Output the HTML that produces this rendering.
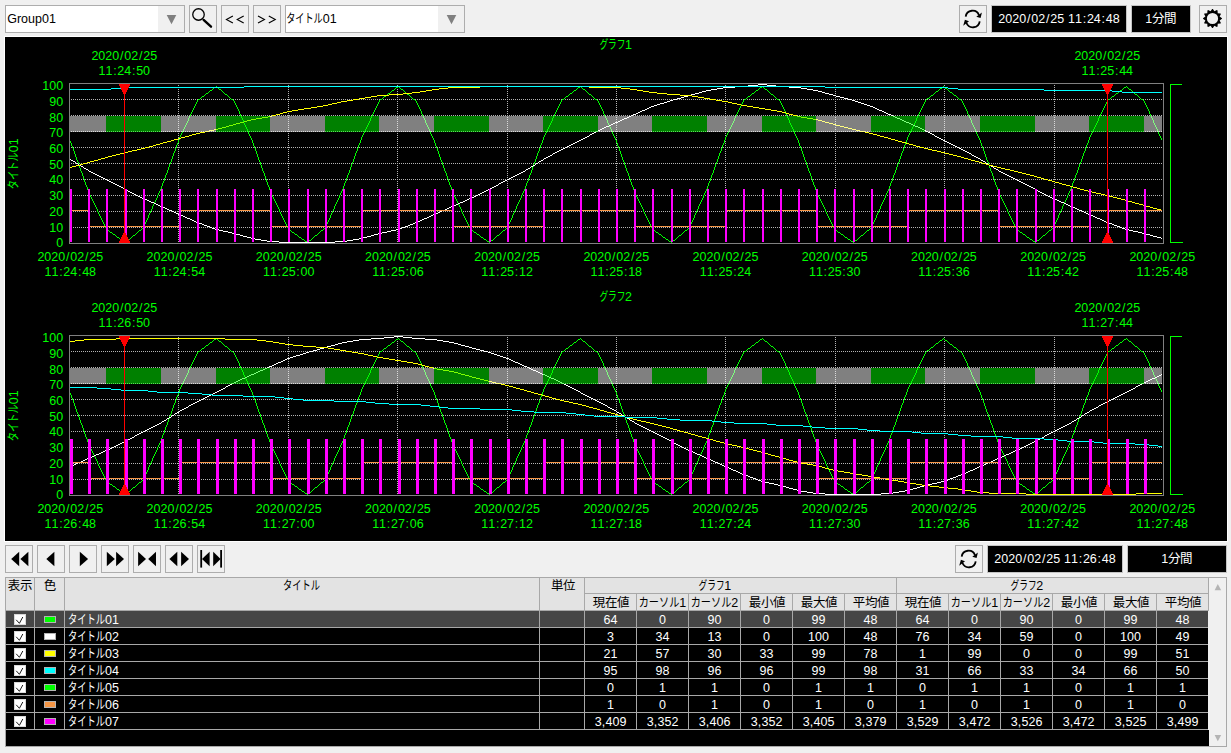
<!DOCTYPE html>
<html><head><meta charset="utf-8"><title>Trend</title>
<style>html,body{margin:0;padding:0;background:#f0f0f0;overflow:hidden}body{width:1231px;height:753px;font-family:"Liberation Sans",sans-serif}</style>
</head><body>
<svg width="1231" height="753" viewBox="0 0 1231 753" style="display:block">
<rect x="0" y="0" width="1231" height="753" fill="#f0f0f0"/>
<rect x="5.5" y="5.5" width="179" height="27" fill="#ffffff" stroke="#adadad"/>
<rect x="158" y="6" width="26" height="26" fill="#f0f0f0"/>
<polygon points="166.7,15 176.3,15 171.5,24.3" fill="#808080"/>
<text font-family="Liberation Sans, sans-serif" font-size="12.5" fill="#000" y="23" x="7.20 16.92 21.09 28.04 34.99 41.94 48.89">Group01</text>
<rect x="285.5" y="5.5" width="179" height="27" fill="#ffffff" stroke="#adadad"/>
<rect x="438" y="6" width="26" height="26" fill="#f0f0f0"/>
<polygon points="446.7,15 456.3,15 451.5,24.3" fill="#808080"/>
<text font-family="'Liberation Sans', 'Noto Sans CJK JP', sans-serif" font-size="12.5" fill="#000" x="286.15" y="23" textLength="36.5" lengthAdjust="spacingAndGlyphs">タイトル</text>
<text font-family="Liberation Sans, sans-serif" font-size="12.5" fill="#000" y="23" x="322.70 329.65">01</text>
<rect x="189.5" y="5.5" width="27" height="27" fill="#f0f0f0" stroke="#adadad" stroke-width="1"/>
<circle cx="198.5" cy="14.5" r="5.75" fill="none" stroke="#000" stroke-width="1.3"/>
<line x1="203.6" y1="19.9" x2="211.0" y2="26.7" stroke="#000" stroke-width="2.4" stroke-linecap="round"/>
<rect x="221.5" y="5.5" width="27" height="27" fill="#f0f0f0" stroke="#adadad" stroke-width="1"/>
<rect x="253.5" y="5.5" width="27" height="27" fill="#f0f0f0" stroke="#adadad" stroke-width="1"/>
<polyline points="232.9,15.9 226.4,19.5 232.9,23.1" fill="none" stroke="#000" stroke-width="1.1"/>
<polyline points="243.7,15.9 237.2,19.5 243.7,23.1" fill="none" stroke="#000" stroke-width="1.1"/>
<polyline points="258,15.9 264.5,19.5 258,23.1" fill="none" stroke="#000" stroke-width="1.1"/>
<polyline points="268.8,15.9 275.3,19.5 268.8,23.1" fill="none" stroke="#000" stroke-width="1.1"/>
<rect x="959.5" y="5.5" width="27" height="27" fill="#f0f0f0" stroke="#adadad" stroke-width="1"/>
<g transform="translate(0 0)">
<path d="M965.7 16.7A6.9 6.9 0 0 1 979.0 15.2" fill="none" stroke="#000" stroke-width="1.8"/>
<polygon points="981.9,12.4 980.6,17.9 976.3,16.8" fill="#000"/>
<path d="M979.7 21.3A6.9 6.9 0 0 1 966.4 22.8" fill="none" stroke="#000" stroke-width="1.8"/>
<polygon points="963.2,25.7 964.9,19.7 969.0,21.3" fill="#000"/>
</g>
<rect x="991.5" y="5.5" width="135" height="27" fill="#000" stroke="#c4c4c4"/>
<text font-family="Liberation Sans, sans-serif" font-size="12.5" fill="#fff" y="23" x="998.30 1005.25 1012.20 1019.16 1026.92 1031.21 1038.16 1045.92 1050.21 1057.16 1064.38 1068.12 1075.07 1082.73 1086.92 1093.87 1101.54 1105.72 1112.67">2020/02/25 11:24:48</text>
<rect x="1131.5" y="5.5" width="59" height="27" fill="#000" stroke="#c4c4c4"/>
<text font-family="Liberation Sans, sans-serif" font-size="12.5" fill="#fff" y="23" x="1145.15">1</text>
<text font-family="'Liberation Sans', 'Noto Sans CJK JP', sans-serif" font-size="12.5" fill="#fff" y="23.25" x="1152.05 1164.05">分間</text>
<rect x="1199.5" y="5.5" width="27" height="27" fill="#f0f0f0" stroke="#adadad" stroke-width="1"/>
<path d="M1212.14 9.01L1212.86 9.01L1214.42 11.35L1216.93 10.10L1217.56 10.46L1217.73 13.27L1220.54 13.44L1220.90 14.07L1219.65 16.58L1221.99 18.14L1221.99 18.86L1219.65 20.42L1220.90 22.93L1220.54 23.56L1217.73 23.73L1217.56 26.54L1216.93 26.90L1214.42 25.65L1212.86 27.99L1212.14 27.99L1210.58 25.65L1208.07 26.90L1207.44 26.54L1207.27 23.73L1204.46 23.56L1204.10 22.93L1205.35 20.42L1203.01 18.86L1203.01 18.14L1205.35 16.58L1204.10 14.07L1204.46 13.44L1207.27 13.27L1207.44 10.46L1208.07 10.10L1210.58 11.35ZM1206.90 18.50A5.6 5.6 0 1 0 1218.10 18.50A5.6 5.6 0 1 0 1206.90 18.50Z" fill="#000" fill-rule="evenodd"/>
<rect x="4" y="36" width="1224" height="506" fill="#ffffff"/>
<rect x="5" y="37" width="1222" height="504" fill="#000000"/>
<text font-family="'Liberation Sans', 'Noto Sans CJK JP', sans-serif" font-size="12.5" fill="#00ff00" x="599.41" y="49.3" textLength="26" lengthAdjust="spacingAndGlyphs">グラフ</text>
<text font-family="Liberation Sans, sans-serif" font-size="12.5" fill="#00ff00" y="49.3" x="625.00">1</text>
<text font-family="Liberation Sans, sans-serif" font-size="12.5" fill="#00ff00" y="90" x="42.34 49.30 56.25">100</text>
<text font-family="Liberation Sans, sans-serif" font-size="12.5" fill="#00ff00" y="106" x="49.30 56.25">90</text>
<text font-family="Liberation Sans, sans-serif" font-size="12.5" fill="#00ff00" y="122" x="49.30 56.25">80</text>
<text font-family="Liberation Sans, sans-serif" font-size="12.5" fill="#00ff00" y="137" x="49.30 56.25">70</text>
<text font-family="Liberation Sans, sans-serif" font-size="12.5" fill="#00ff00" y="153" x="49.30 56.25">60</text>
<text font-family="Liberation Sans, sans-serif" font-size="12.5" fill="#00ff00" y="169" x="49.30 56.25">50</text>
<text font-family="Liberation Sans, sans-serif" font-size="12.5" fill="#00ff00" y="184" x="49.30 56.25">40</text>
<text font-family="Liberation Sans, sans-serif" font-size="12.5" fill="#00ff00" y="200" x="49.30 56.25">30</text>
<text font-family="Liberation Sans, sans-serif" font-size="12.5" fill="#00ff00" y="216" x="49.30 56.25">20</text>
<text font-family="Liberation Sans, sans-serif" font-size="12.5" fill="#00ff00" y="232" x="49.30 56.25">10</text>
<text font-family="Liberation Sans, sans-serif" font-size="12.5" fill="#00ff00" y="247" x="56.25">0</text>
<g transform="translate(18.3 188.2) rotate(-90)">
<text font-family="'Liberation Sans', 'Noto Sans CJK JP', sans-serif" font-size="12.5" fill="#00ff00" x="-0.95" y="0" textLength="37" lengthAdjust="spacingAndGlyphs">タイトル</text>
<text font-family="Liberation Sans, sans-serif" font-size="12.5" fill="#00ff00" y="0" x="36.00 42.95">01</text>
</g>
<line x1="71" y1="99.5" x2="1163" y2="99.5" stroke="#b4b4b4" stroke-dasharray="1 1" shape-rendering="crispEdges"/>
<line x1="71" y1="115.5" x2="1163" y2="115.5" stroke="#b4b4b4" stroke-dasharray="1 1" shape-rendering="crispEdges"/>
<line x1="71" y1="131.5" x2="1163" y2="131.5" stroke="#b4b4b4" stroke-dasharray="1 1" shape-rendering="crispEdges"/>
<line x1="71" y1="147.5" x2="1163" y2="147.5" stroke="#b4b4b4" stroke-dasharray="1 1" shape-rendering="crispEdges"/>
<line x1="71" y1="163.5" x2="1163" y2="163.5" stroke="#b4b4b4" stroke-dasharray="1 1" shape-rendering="crispEdges"/>
<line x1="71" y1="179.5" x2="1163" y2="179.5" stroke="#b4b4b4" stroke-dasharray="1 1" shape-rendering="crispEdges"/>
<line x1="71" y1="195.5" x2="1163" y2="195.5" stroke="#b4b4b4" stroke-dasharray="1 1" shape-rendering="crispEdges"/>
<line x1="71" y1="211.5" x2="1163" y2="211.5" stroke="#b4b4b4" stroke-dasharray="1 1" shape-rendering="crispEdges"/>
<line x1="71" y1="227.5" x2="1163" y2="227.5" stroke="#b4b4b4" stroke-dasharray="1 1" shape-rendering="crispEdges"/>
<line x1="178.5" y1="85" x2="178.5" y2="243" stroke="#b4b4b4" stroke-dasharray="1 1" shape-rendering="crispEdges"/>
<line x1="288.5" y1="85" x2="288.5" y2="243" stroke="#b4b4b4" stroke-dasharray="1 1" shape-rendering="crispEdges"/>
<line x1="397.5" y1="85" x2="397.5" y2="243" stroke="#b4b4b4" stroke-dasharray="1 1" shape-rendering="crispEdges"/>
<line x1="507.5" y1="85" x2="507.5" y2="243" stroke="#b4b4b4" stroke-dasharray="1 1" shape-rendering="crispEdges"/>
<line x1="616.5" y1="85" x2="616.5" y2="243" stroke="#b4b4b4" stroke-dasharray="1 1" shape-rendering="crispEdges"/>
<line x1="725.5" y1="85" x2="725.5" y2="243" stroke="#b4b4b4" stroke-dasharray="1 1" shape-rendering="crispEdges"/>
<line x1="835.5" y1="85" x2="835.5" y2="243" stroke="#b4b4b4" stroke-dasharray="1 1" shape-rendering="crispEdges"/>
<line x1="944.5" y1="85" x2="944.5" y2="243" stroke="#b4b4b4" stroke-dasharray="1 1" shape-rendering="crispEdges"/>
<line x1="1054.5" y1="85" x2="1054.5" y2="243" stroke="#b4b4b4" stroke-dasharray="1 1" shape-rendering="crispEdges"/>
<path d="M70 141h1v2h-1zM71 143h1v3h-1zM72 146h1v2h-1zM73 148h1v3h-1zM74 151h1v3h-1zM75 154h1v3h-1zM76 157h1v3h-1zM77 160h1v2h-1zM78 162h1v3h-1zM79 165h1v3h-1zM80 168h1v3h-1zM81 171h1v2h-1zM82 173h1v3h-1zM83 176h1v3h-1zM84 179h1v3h-1zM85 182h1v3h-1zM86 185h1v2h-1zM87 187h1v3h-1zM88 190h1v3h-1zM89 193h1v2h-1zM90 195h1v2h-1zM91 197h1v2h-1zM92 199h1v2h-1zM93 201h1v2h-1zM94 203h1v2h-1zM95 205h1v2h-1zM96 207h1v2h-1zM97 209h1v3h-1zM98 212h1v2h-1zM99 214h1v2h-1zM100 216h1v2h-1zM101 218h1v2h-1zM102 220h1v2h-1zM103 222h1v2h-1zM104 224h1v2h-1zM105 226h1v2h-1zM106 228h1v2h-1zM107 230h2v1h-2zM109 231h1v1h-1zM110 232h2v1h-2zM112 233h1v1h-1zM113 234h2v1h-2zM115 235h1v1h-1zM116 236h1v1h-1zM117 237h2v1h-2zM119 238h1v1h-1zM120 239h2v1h-2zM122 240h1v1h-1zM123 241h2v1h-2zM125 242h1v1h-1zM126 241h1v1h-1zM127 240h2v1h-2zM129 239h1v1h-1zM130 238h1v1h-1zM131 237h1v1h-1zM132 236h1v1h-1zM133 235h2v1h-2zM135 234h1v1h-1zM136 233h1v1h-1zM137 232h1v1h-1zM138 231h1v1h-1zM139 230h2v1h-2zM141 229h1v1h-1zM142 228h1v1h-1zM143 226h1v2h-1zM144 224h1v2h-1zM145 222h1v2h-1zM146 220h1v2h-1zM147 218h1v2h-1zM148 215h1v3h-1zM149 213h1v2h-1zM150 211h1v2h-1zM151 209h1v2h-1zM152 206h1v3h-1zM153 204h1v2h-1zM154 202h1v2h-1zM155 200h1v2h-1zM156 198h1v2h-1zM157 195h1v3h-1zM158 193h1v2h-1zM159 191h1v2h-1zM160 189h1v2h-1zM161 186h1v3h-1zM162 183h1v3h-1zM163 181h1v2h-1zM164 178h1v3h-1zM165 175h1v3h-1zM166 173h1v2h-1zM167 170h1v3h-1zM168 167h1v3h-1zM169 164h1v3h-1zM170 162h1v2h-1zM171 159h1v3h-1zM172 156h1v3h-1zM173 153h1v3h-1zM174 151h1v2h-1zM175 148h1v3h-1zM176 145h1v3h-1zM177 143h1v2h-1zM178 140h1v3h-1zM179 137h1v3h-1zM180 135h1v2h-1zM181 133h1v2h-1zM182 131h1v2h-1zM183 129h1v2h-1zM184 127h1v2h-1zM185 125h1v2h-1zM186 123h1v2h-1zM187 121h1v2h-1zM188 118h1v3h-1zM189 116h1v2h-1zM190 114h1v2h-1zM191 112h1v2h-1zM192 110h1v2h-1zM193 108h1v2h-1zM194 106h1v2h-1zM195 104h1v2h-1zM196 102h1v2h-1zM197 100h1v2h-1zM198 99h2v1h-2zM200 98h1v1h-1zM201 97h1v1h-1zM202 96h2v1h-2zM204 95h1v1h-1zM205 94h1v1h-1zM206 93h2v1h-2zM208 92h1v1h-1zM209 91h1v1h-1zM210 90h2v1h-2zM212 89h1v1h-1zM213 88h1v1h-1zM214 87h2v1h-2zM216 86h1v1h-1zM217 87h1v1h-1zM218 88h1v1h-1zM219 89h2v1h-2zM221 90h1v1h-1zM222 91h1v1h-1zM223 92h1v1h-1zM224 93h1v1h-1zM225 94h2v1h-2zM227 95h1v1h-1zM228 96h1v1h-1zM229 97h1v1h-1zM230 98h1v1h-1zM231 99h2v1h-2zM233 100h1v1h-1zM234 101h1v2h-1zM235 103h1v2h-1zM236 105h1v2h-1zM237 107h1v2h-1zM238 109h1v2h-1zM239 111h1v3h-1zM240 114h1v2h-1zM241 116h1v2h-1zM242 118h1v2h-1zM243 120h1v3h-1zM244 123h1v2h-1zM245 125h1v2h-1zM246 127h1v2h-1zM247 129h1v2h-1zM248 131h1v3h-1zM249 134h1v2h-1zM250 136h1v2h-1zM251 138h1v2h-1zM252 140h1v3h-1zM253 143h1v3h-1zM254 146h1v2h-1zM255 148h1v3h-1zM256 151h1v3h-1zM257 154h1v3h-1zM258 157h1v3h-1zM259 160h1v2h-1zM260 162h1v3h-1zM261 165h1v3h-1zM262 168h1v3h-1zM263 171h1v2h-1zM264 173h1v3h-1zM265 176h1v3h-1zM266 179h1v3h-1zM267 182h1v3h-1zM268 185h1v2h-1zM269 187h1v3h-1zM270 190h1v3h-1zM271 193h1v2h-1zM272 195h1v2h-1zM273 197h1v2h-1zM274 199h1v2h-1zM275 201h1v2h-1zM276 203h1v2h-1zM277 205h1v2h-1zM278 207h1v2h-1zM279 209h1v3h-1zM280 212h1v2h-1zM281 214h1v2h-1zM282 216h1v2h-1zM283 218h1v2h-1zM284 220h1v2h-1zM285 222h1v2h-1zM286 224h1v2h-1zM287 226h1v2h-1zM288 228h1v2h-1zM289 230h2v1h-2zM291 231h1v1h-1zM292 232h2v1h-2zM294 233h1v1h-1zM295 234h2v1h-2zM297 235h1v1h-1zM298 236h1v1h-1zM299 237h2v1h-2zM301 238h1v1h-1zM302 239h2v1h-2zM304 240h1v1h-1zM305 241h2v1h-2zM307 242h1v1h-1zM308 241h1v1h-1zM309 240h2v1h-2zM311 239h1v1h-1zM312 238h1v1h-1zM313 237h1v1h-1zM314 236h1v1h-1zM315 235h2v1h-2zM317 234h1v1h-1zM318 233h1v1h-1zM319 232h1v1h-1zM320 231h1v1h-1zM321 230h2v1h-2zM323 229h1v1h-1zM324 228h1v1h-1zM325 226h1v2h-1zM326 224h1v2h-1zM327 222h1v2h-1zM328 220h1v2h-1zM329 218h1v2h-1zM330 215h1v3h-1zM331 213h1v2h-1zM332 211h1v2h-1zM333 209h1v2h-1zM334 206h1v3h-1zM335 204h1v2h-1zM336 202h1v2h-1zM337 200h1v2h-1zM338 198h1v2h-1zM339 195h1v3h-1zM340 193h1v2h-1zM341 191h1v2h-1zM342 189h1v2h-1zM343 186h1v3h-1zM344 183h1v3h-1zM345 181h1v2h-1zM346 178h1v3h-1zM347 175h1v3h-1zM348 173h1v2h-1zM349 170h1v3h-1zM350 167h1v3h-1zM351 164h1v3h-1zM352 162h1v2h-1zM353 159h1v3h-1zM354 156h1v3h-1zM355 153h1v3h-1zM356 151h1v2h-1zM357 148h1v3h-1zM358 145h1v3h-1zM359 143h1v2h-1zM360 140h1v3h-1zM361 137h1v3h-1zM362 135h1v2h-1zM363 133h1v2h-1zM364 131h1v2h-1zM365 129h1v2h-1zM366 127h1v2h-1zM367 125h1v2h-1zM368 123h1v2h-1zM369 121h1v2h-1zM370 118h1v3h-1zM371 116h1v2h-1zM372 114h1v2h-1zM373 112h1v2h-1zM374 110h1v2h-1zM375 108h1v2h-1zM376 106h1v2h-1zM377 104h1v2h-1zM378 102h1v2h-1zM379 100h1v2h-1zM380 99h2v1h-2zM382 98h1v1h-1zM383 97h1v1h-1zM384 96h2v1h-2zM386 95h1v1h-1zM387 94h1v1h-1zM388 93h2v1h-2zM390 92h1v1h-1zM391 91h1v1h-1zM392 90h2v1h-2zM394 89h1v1h-1zM395 88h1v1h-1zM396 87h2v1h-2zM398 86h1v1h-1zM399 87h1v1h-1zM400 88h1v1h-1zM401 89h2v1h-2zM403 90h1v1h-1zM404 91h1v1h-1zM405 92h1v1h-1zM406 93h1v1h-1zM407 94h2v1h-2zM409 95h1v1h-1zM410 96h1v1h-1zM411 97h1v1h-1zM412 98h1v1h-1zM413 99h2v1h-2zM415 100h1v1h-1zM416 101h1v2h-1zM417 103h1v2h-1zM418 105h1v2h-1zM419 107h1v2h-1zM420 109h1v2h-1zM421 111h1v3h-1zM422 114h1v2h-1zM423 116h1v2h-1zM424 118h1v2h-1zM425 120h1v3h-1zM426 123h1v2h-1zM427 125h1v2h-1zM428 127h1v2h-1zM429 129h1v2h-1zM430 131h1v3h-1zM431 134h1v2h-1zM432 136h1v2h-1zM433 138h1v2h-1zM434 140h1v3h-1zM435 143h1v3h-1zM436 146h1v2h-1zM437 148h1v3h-1zM438 151h1v3h-1zM439 154h1v3h-1zM440 157h1v3h-1zM441 160h1v2h-1zM442 162h1v3h-1zM443 165h1v3h-1zM444 168h1v3h-1zM445 171h1v2h-1zM446 173h1v3h-1zM447 176h1v3h-1zM448 179h1v3h-1zM449 182h1v3h-1zM450 185h1v2h-1zM451 187h1v3h-1zM452 190h1v3h-1zM453 193h1v2h-1zM454 195h1v2h-1zM455 197h1v2h-1zM456 199h1v2h-1zM457 201h1v2h-1zM458 203h1v2h-1zM459 205h1v2h-1zM460 207h1v2h-1zM461 209h1v3h-1zM462 212h1v2h-1zM463 214h1v2h-1zM464 216h1v2h-1zM465 218h1v2h-1zM466 220h1v2h-1zM467 222h1v2h-1zM468 224h1v2h-1zM469 226h1v2h-1zM470 228h1v2h-1zM471 230h2v1h-2zM473 231h1v1h-1zM474 232h2v1h-2zM476 233h1v1h-1zM477 234h2v1h-2zM479 235h1v1h-1zM480 236h1v1h-1zM481 237h2v1h-2zM483 238h1v1h-1zM484 239h2v1h-2zM486 240h1v1h-1zM487 241h2v1h-2zM489 242h1v1h-1zM490 241h1v1h-1zM491 240h2v1h-2zM493 239h1v1h-1zM494 238h1v1h-1zM495 237h1v1h-1zM496 236h1v1h-1zM497 235h2v1h-2zM499 234h1v1h-1zM500 233h1v1h-1zM501 232h1v1h-1zM502 231h1v1h-1zM503 230h2v1h-2zM505 229h1v1h-1zM506 228h1v1h-1zM507 226h1v2h-1zM508 224h1v2h-1zM509 222h1v2h-1zM510 220h1v2h-1zM511 218h1v2h-1zM512 215h1v3h-1zM513 213h1v2h-1zM514 211h1v2h-1zM515 209h1v2h-1zM516 206h1v3h-1zM517 204h1v2h-1zM518 202h1v2h-1zM519 200h1v2h-1zM520 198h1v2h-1zM521 195h1v3h-1zM522 193h1v2h-1zM523 191h1v2h-1zM524 189h1v2h-1zM525 186h1v3h-1zM526 183h1v3h-1zM527 181h1v2h-1zM528 178h1v3h-1zM529 175h1v3h-1zM530 173h1v2h-1zM531 170h1v3h-1zM532 167h1v3h-1zM533 164h1v3h-1zM534 162h1v2h-1zM535 159h1v3h-1zM536 156h1v3h-1zM537 153h1v3h-1zM538 151h1v2h-1zM539 148h1v3h-1zM540 145h1v3h-1zM541 143h1v2h-1zM542 140h1v3h-1zM543 137h1v3h-1zM544 135h1v2h-1zM545 133h1v2h-1zM546 131h1v2h-1zM547 129h1v2h-1zM548 127h1v2h-1zM549 125h1v2h-1zM550 123h1v2h-1zM551 121h1v2h-1zM552 118h1v3h-1zM553 116h1v2h-1zM554 114h1v2h-1zM555 112h1v2h-1zM556 110h1v2h-1zM557 108h1v2h-1zM558 106h1v2h-1zM559 104h1v2h-1zM560 102h1v2h-1zM561 100h1v2h-1zM562 99h2v1h-2zM564 98h1v1h-1zM565 97h1v1h-1zM566 96h2v1h-2zM568 95h1v1h-1zM569 94h1v1h-1zM570 93h2v1h-2zM572 92h1v1h-1zM573 91h1v1h-1zM574 90h2v1h-2zM576 89h1v1h-1zM577 88h1v1h-1zM578 87h2v1h-2zM580 86h1v1h-1zM581 87h1v1h-1zM582 88h1v1h-1zM583 89h2v1h-2zM585 90h1v1h-1zM586 91h1v1h-1zM587 92h1v1h-1zM588 93h1v1h-1zM589 94h2v1h-2zM591 95h1v1h-1zM592 96h1v1h-1zM593 97h1v1h-1zM594 98h1v1h-1zM595 99h2v1h-2zM597 100h1v1h-1zM598 101h1v2h-1zM599 103h1v2h-1zM600 105h1v2h-1zM601 107h1v2h-1zM602 109h1v2h-1zM603 111h1v3h-1zM604 114h1v2h-1zM605 116h1v2h-1zM606 118h1v2h-1zM607 120h1v3h-1zM608 123h1v2h-1zM609 125h1v2h-1zM610 127h1v2h-1zM611 129h1v2h-1zM612 131h1v3h-1zM613 134h1v2h-1zM614 136h1v2h-1zM615 138h1v2h-1zM616 140h1v3h-1zM617 143h1v3h-1zM618 146h1v2h-1zM619 148h1v3h-1zM620 151h1v3h-1zM621 154h1v3h-1zM622 157h1v3h-1zM623 160h1v2h-1zM624 162h1v3h-1zM625 165h1v3h-1zM626 168h1v3h-1zM627 171h1v2h-1zM628 173h1v3h-1zM629 176h1v3h-1zM630 179h1v3h-1zM631 182h1v3h-1zM632 185h1v2h-1zM633 187h1v3h-1zM634 190h1v3h-1zM635 193h1v2h-1zM636 195h1v2h-1zM637 197h1v2h-1zM638 199h1v2h-1zM639 201h1v2h-1zM640 203h1v2h-1zM641 205h1v2h-1zM642 207h1v2h-1zM643 209h1v3h-1zM644 212h1v2h-1zM645 214h1v2h-1zM646 216h1v2h-1zM647 218h1v2h-1zM648 220h1v2h-1zM649 222h1v2h-1zM650 224h1v2h-1zM651 226h1v2h-1zM652 228h1v2h-1zM653 230h2v1h-2zM655 231h1v1h-1zM656 232h2v1h-2zM658 233h1v1h-1zM659 234h2v1h-2zM661 235h1v1h-1zM662 236h1v1h-1zM663 237h2v1h-2zM665 238h1v1h-1zM666 239h2v1h-2zM668 240h1v1h-1zM669 241h2v1h-2zM671 242h1v1h-1zM672 241h1v1h-1zM673 240h2v1h-2zM675 239h1v1h-1zM676 238h1v1h-1zM677 237h1v1h-1zM678 236h1v1h-1zM679 235h2v1h-2zM681 234h1v1h-1zM682 233h1v1h-1zM683 232h1v1h-1zM684 231h1v1h-1zM685 230h2v1h-2zM687 229h1v1h-1zM688 228h1v1h-1zM689 226h1v2h-1zM690 224h1v2h-1zM691 222h1v2h-1zM692 220h1v2h-1zM693 218h1v2h-1zM694 215h1v3h-1zM695 213h1v2h-1zM696 211h1v2h-1zM697 209h1v2h-1zM698 206h1v3h-1zM699 204h1v2h-1zM700 202h1v2h-1zM701 200h1v2h-1zM702 198h1v2h-1zM703 195h1v3h-1zM704 193h1v2h-1zM705 191h1v2h-1zM706 189h1v2h-1zM707 186h1v3h-1zM708 183h1v3h-1zM709 181h1v2h-1zM710 178h1v3h-1zM711 175h1v3h-1zM712 173h1v2h-1zM713 170h1v3h-1zM714 167h1v3h-1zM715 164h1v3h-1zM716 162h1v2h-1zM717 159h1v3h-1zM718 156h1v3h-1zM719 153h1v3h-1zM720 151h1v2h-1zM721 148h1v3h-1zM722 145h1v3h-1zM723 143h1v2h-1zM724 140h1v3h-1zM725 137h1v3h-1zM726 135h1v2h-1zM727 133h1v2h-1zM728 131h1v2h-1zM729 129h1v2h-1zM730 127h1v2h-1zM731 125h1v2h-1zM732 123h1v2h-1zM733 121h1v2h-1zM734 118h1v3h-1zM735 116h1v2h-1zM736 114h1v2h-1zM737 112h1v2h-1zM738 110h1v2h-1zM739 108h1v2h-1zM740 106h1v2h-1zM741 104h1v2h-1zM742 102h1v2h-1zM743 100h1v2h-1zM744 99h2v1h-2zM746 98h1v1h-1zM747 97h1v1h-1zM748 96h2v1h-2zM750 95h1v1h-1zM751 94h1v1h-1zM752 93h2v1h-2zM754 92h1v1h-1zM755 91h1v1h-1zM756 90h2v1h-2zM758 89h1v1h-1zM759 88h1v1h-1zM760 87h2v1h-2zM762 86h1v1h-1zM763 87h1v1h-1zM764 88h1v1h-1zM765 89h2v1h-2zM767 90h1v1h-1zM768 91h1v1h-1zM769 92h1v1h-1zM770 93h1v1h-1zM771 94h2v1h-2zM773 95h1v1h-1zM774 96h1v1h-1zM775 97h1v1h-1zM776 98h1v1h-1zM777 99h2v1h-2zM779 100h1v1h-1zM780 101h1v2h-1zM781 103h1v2h-1zM782 105h1v2h-1zM783 107h1v2h-1zM784 109h1v2h-1zM785 111h1v3h-1zM786 114h1v2h-1zM787 116h1v2h-1zM788 118h1v2h-1zM789 120h1v3h-1zM790 123h1v2h-1zM791 125h1v2h-1zM792 127h1v2h-1zM793 129h1v2h-1zM794 131h1v3h-1zM795 134h1v2h-1zM796 136h1v2h-1zM797 138h1v2h-1zM798 140h1v3h-1zM799 143h1v3h-1zM800 146h1v2h-1zM801 148h1v3h-1zM802 151h1v3h-1zM803 154h1v3h-1zM804 157h1v3h-1zM805 160h1v2h-1zM806 162h1v3h-1zM807 165h1v3h-1zM808 168h1v3h-1zM809 171h1v2h-1zM810 173h1v3h-1zM811 176h1v3h-1zM812 179h1v3h-1zM813 182h1v3h-1zM814 185h1v2h-1zM815 187h1v3h-1zM816 190h1v3h-1zM817 193h1v2h-1zM818 195h1v2h-1zM819 197h1v2h-1zM820 199h1v2h-1zM821 201h1v2h-1zM822 203h1v2h-1zM823 205h1v2h-1zM824 207h1v2h-1zM825 209h1v3h-1zM826 212h1v2h-1zM827 214h1v2h-1zM828 216h1v2h-1zM829 218h1v2h-1zM830 220h1v2h-1zM831 222h1v2h-1zM832 224h1v2h-1zM833 226h1v2h-1zM834 228h1v2h-1zM835 230h2v1h-2zM837 231h1v1h-1zM838 232h2v1h-2zM840 233h1v1h-1zM841 234h2v1h-2zM843 235h1v1h-1zM844 236h1v1h-1zM845 237h2v1h-2zM847 238h1v1h-1zM848 239h2v1h-2zM850 240h1v1h-1zM851 241h2v1h-2zM853 242h1v1h-1zM854 241h1v1h-1zM855 240h2v1h-2zM857 239h1v1h-1zM858 238h1v1h-1zM859 237h1v1h-1zM860 236h1v1h-1zM861 235h2v1h-2zM863 234h1v1h-1zM864 233h1v1h-1zM865 232h1v1h-1zM866 231h1v1h-1zM867 230h2v1h-2zM869 229h1v1h-1zM870 228h1v1h-1zM871 226h1v2h-1zM872 224h1v2h-1zM873 222h1v2h-1zM874 220h1v2h-1zM875 218h1v2h-1zM876 215h1v3h-1zM877 213h1v2h-1zM878 211h1v2h-1zM879 209h1v2h-1zM880 206h1v3h-1zM881 204h1v2h-1zM882 202h1v2h-1zM883 200h1v2h-1zM884 198h1v2h-1zM885 195h1v3h-1zM886 193h1v2h-1zM887 191h1v2h-1zM888 189h1v2h-1zM889 186h1v3h-1zM890 183h1v3h-1zM891 181h1v2h-1zM892 178h1v3h-1zM893 175h1v3h-1zM894 173h1v2h-1zM895 170h1v3h-1zM896 167h1v3h-1zM897 164h1v3h-1zM898 162h1v2h-1zM899 159h1v3h-1zM900 156h1v3h-1zM901 153h1v3h-1zM902 151h1v2h-1zM903 148h1v3h-1zM904 145h1v3h-1zM905 143h1v2h-1zM906 140h1v3h-1zM907 137h1v3h-1zM908 135h1v2h-1zM909 133h1v2h-1zM910 131h1v2h-1zM911 129h1v2h-1zM912 127h1v2h-1zM913 125h1v2h-1zM914 123h1v2h-1zM915 121h1v2h-1zM916 118h1v3h-1zM917 116h1v2h-1zM918 114h1v2h-1zM919 112h1v2h-1zM920 110h1v2h-1zM921 108h1v2h-1zM922 106h1v2h-1zM923 104h1v2h-1zM924 102h1v2h-1zM925 100h1v2h-1zM926 99h1v1h-1zM927 98h2v1h-2zM929 97h1v1h-1zM930 96h1v1h-1zM931 95h2v1h-2zM933 94h1v1h-1zM934 93h1v1h-1zM935 92h1v1h-1zM936 91h2v1h-2zM938 90h1v1h-1zM939 89h1v1h-1zM940 88h2v1h-2zM942 87h1v1h-1zM943 86h1v1h-1zM944 87h1v1h-1zM945 88h2v1h-2zM947 89h1v1h-1zM948 90h1v1h-1zM949 91h1v1h-1zM950 92h2v1h-2zM952 93h1v1h-1zM953 94h1v1h-1zM954 95h2v1h-2zM956 96h1v1h-1zM957 97h1v1h-1zM958 98h1v1h-1zM959 99h2v1h-2zM961 100h1v1h-1zM962 101h1v2h-1zM963 103h1v2h-1zM964 105h1v2h-1zM965 107h1v2h-1zM966 109h1v2h-1zM967 111h1v3h-1zM968 114h1v2h-1zM969 116h1v2h-1zM970 118h1v2h-1zM971 120h1v3h-1zM972 123h1v2h-1zM973 125h1v2h-1zM974 127h1v2h-1zM975 129h1v2h-1zM976 131h1v3h-1zM977 134h1v2h-1zM978 136h1v2h-1zM979 138h1v2h-1zM980 140h1v3h-1zM981 143h1v3h-1zM982 146h1v2h-1zM983 148h1v3h-1zM984 151h1v3h-1zM985 154h1v3h-1zM986 157h1v3h-1zM987 160h1v2h-1zM988 162h1v3h-1zM989 165h1v3h-1zM990 168h1v3h-1zM991 171h1v2h-1zM992 173h1v3h-1zM993 176h1v3h-1zM994 179h1v3h-1zM995 182h1v3h-1zM996 185h1v2h-1zM997 187h1v3h-1zM998 190h1v3h-1zM999 193h1v2h-1zM1000 195h1v2h-1zM1001 197h1v2h-1zM1002 199h1v2h-1zM1003 201h1v2h-1zM1004 203h1v2h-1zM1005 205h1v2h-1zM1006 207h1v2h-1zM1007 209h1v3h-1zM1008 212h1v2h-1zM1009 214h1v2h-1zM1010 216h1v2h-1zM1011 218h1v2h-1zM1012 220h1v2h-1zM1013 222h1v2h-1zM1014 224h1v2h-1zM1015 226h1v2h-1zM1016 228h1v2h-1zM1017 230h2v1h-2zM1019 231h1v1h-1zM1020 232h2v1h-2zM1022 233h1v1h-1zM1023 234h2v1h-2zM1025 235h1v1h-1zM1026 236h1v1h-1zM1027 237h2v1h-2zM1029 238h1v1h-1zM1030 239h2v1h-2zM1032 240h1v1h-1zM1033 241h2v1h-2zM1035 242h1v1h-1zM1036 241h1v1h-1zM1037 240h2v1h-2zM1039 239h1v1h-1zM1040 238h1v1h-1zM1041 237h1v1h-1zM1042 236h1v1h-1zM1043 235h2v1h-2zM1045 234h1v1h-1zM1046 233h1v1h-1zM1047 232h1v1h-1zM1048 231h1v1h-1zM1049 230h2v1h-2zM1051 229h1v1h-1zM1052 228h1v1h-1zM1053 226h1v2h-1zM1054 224h1v2h-1zM1055 222h1v2h-1zM1056 220h1v2h-1zM1057 218h1v2h-1zM1058 215h1v3h-1zM1059 213h1v2h-1zM1060 211h1v2h-1zM1061 209h1v2h-1zM1062 206h1v3h-1zM1063 204h1v2h-1zM1064 202h1v2h-1zM1065 200h1v2h-1zM1066 198h1v2h-1zM1067 195h1v3h-1zM1068 193h1v2h-1zM1069 191h1v2h-1zM1070 189h1v2h-1zM1071 186h1v3h-1zM1072 183h1v3h-1zM1073 181h1v2h-1zM1074 178h1v3h-1zM1075 175h1v3h-1zM1076 173h1v2h-1zM1077 170h1v3h-1zM1078 167h1v3h-1zM1079 164h1v3h-1zM1080 162h1v2h-1zM1081 159h1v3h-1zM1082 156h1v3h-1zM1083 153h1v3h-1zM1084 151h1v2h-1zM1085 148h1v3h-1zM1086 145h1v3h-1zM1087 143h1v2h-1zM1088 140h1v3h-1zM1089 137h1v3h-1zM1090 135h1v2h-1zM1091 133h1v2h-1zM1092 131h1v2h-1zM1093 129h1v2h-1zM1094 127h1v2h-1zM1095 125h1v2h-1zM1096 123h1v2h-1zM1097 121h1v2h-1zM1098 118h1v3h-1zM1099 116h1v2h-1zM1100 114h1v2h-1zM1101 112h1v2h-1zM1102 110h1v2h-1zM1103 108h1v2h-1zM1104 106h1v2h-1zM1105 104h1v2h-1zM1106 102h1v2h-1zM1107 100h1v2h-1zM1108 99h2v1h-2zM1110 98h1v1h-1zM1111 97h1v1h-1zM1112 96h2v1h-2zM1114 95h1v1h-1zM1115 94h1v1h-1zM1116 93h2v1h-2zM1118 92h1v1h-1zM1119 91h1v1h-1zM1120 90h2v1h-2zM1122 89h1v1h-1zM1123 88h1v1h-1zM1124 87h2v1h-2zM1126 86h1v1h-1zM1127 87h1v1h-1zM1128 88h1v1h-1zM1129 89h2v1h-2zM1131 90h1v1h-1zM1132 91h1v1h-1zM1133 92h1v1h-1zM1134 93h1v1h-1zM1135 94h2v1h-2zM1137 95h1v1h-1zM1138 96h1v1h-1zM1139 97h1v1h-1zM1140 98h1v1h-1zM1141 99h2v1h-2zM1143 100h1v1h-1zM1144 101h1v2h-1zM1145 103h1v2h-1zM1146 105h1v2h-1zM1147 107h1v2h-1zM1148 109h1v2h-1zM1149 111h1v3h-1zM1150 114h1v2h-1zM1151 116h1v2h-1zM1152 118h1v2h-1zM1153 120h1v3h-1zM1154 123h1v2h-1zM1155 125h1v2h-1zM1156 127h1v2h-1zM1157 129h1v2h-1zM1158 131h1v3h-1zM1159 134h1v2h-1zM1160 136h1v2h-1zM1161 138h1v2h-1z" fill="#00ff00"/>
<path d="M70 159h1v1h-1zM71 160h2v1h-2zM73 161h2v1h-2zM75 162h1v1h-1zM76 163h2v1h-2zM78 164h1v1h-1zM79 165h2v1h-2zM81 166h2v1h-2zM83 167h1v1h-1zM84 168h2v1h-2zM86 169h2v1h-2zM88 170h1v1h-1zM89 171h2v1h-2zM91 172h2v1h-2zM93 173h2v1h-2zM95 174h2v1h-2zM97 175h2v1h-2zM99 176h2v1h-2zM101 177h2v1h-2zM103 178h2v1h-2zM105 179h2v1h-2zM107 180h2v1h-2zM109 181h2v1h-2zM111 182h2v1h-2zM113 183h2v1h-2zM115 184h2v1h-2zM117 185h2v1h-2zM119 186h2v1h-2zM121 187h2v1h-2zM123 188h2v1h-2zM125 189h1v1h-1zM126 190h2v1h-2zM128 191h2v1h-2zM130 192h2v1h-2zM132 193h2v1h-2zM134 194h2v1h-2zM136 195h2v1h-2zM138 196h2v1h-2zM140 197h2v1h-2zM142 198h3v1h-3zM145 199h2v1h-2zM147 200h2v1h-2zM149 201h2v1h-2zM151 202h3v1h-3zM154 203h2v1h-2zM156 204h2v1h-2zM158 205h2v1h-2zM160 206h3v1h-3zM163 207h2v1h-2zM165 208h2v1h-2zM167 209h2v1h-2zM169 210h3v1h-3zM172 211h2v1h-2zM174 212h2v1h-2zM176 213h2v1h-2zM178 214h3v1h-3zM181 215h2v1h-2zM183 216h2v1h-2zM185 217h2v1h-2zM187 218h3v1h-3zM190 219h2v1h-2zM192 220h2v1h-2zM194 221h2v1h-2zM196 222h3v1h-3zM199 223h3v1h-3zM202 224h2v1h-2zM204 225h3v1h-3zM207 226h3v1h-3zM210 227h2v1h-2zM212 228h3v1h-3zM215 229h4v1h-4zM219 230h4v1h-4zM223 231h5v1h-5zM228 232h4v1h-4zM232 233h4v1h-4zM236 234h4v1h-4zM240 235h3v1h-3zM243 236h4v1h-4zM247 237h4v1h-4zM251 238h4v1h-4zM255 239h6v1h-6zM261 240h6v1h-6zM267 241h12v1h-12zM279 242h56v1h-56zM335 241h12v1h-12zM347 240h6v1h-6zM353 239h6v1h-6zM359 238h4v1h-4zM363 237h4v1h-4zM367 236h4v1h-4zM371 235h3v1h-3zM374 234h4v1h-4zM378 233h4v1h-4zM382 232h5v1h-5zM387 231h4v1h-4zM391 230h5v1h-5zM396 229h4v1h-4zM400 228h2v1h-2zM402 227h3v1h-3zM405 226h3v1h-3zM408 225h2v1h-2zM410 224h3v1h-3zM413 223h2v1h-2zM415 222h3v1h-3zM418 221h2v1h-2zM420 220h2v1h-2zM422 219h2v1h-2zM424 218h3v1h-3zM427 217h2v1h-2zM429 216h2v1h-2zM431 215h2v1h-2zM433 214h3v1h-3zM436 213h2v1h-2zM438 212h2v1h-2zM440 211h2v1h-2zM442 210h3v1h-3zM445 209h2v1h-2zM447 208h2v1h-2zM449 207h2v1h-2zM451 206h3v1h-3zM454 205h2v1h-2zM456 204h2v1h-2zM458 203h2v1h-2zM460 202h3v1h-3zM463 201h2v1h-2zM465 200h2v1h-2zM467 199h2v1h-2zM469 198h3v1h-3zM472 197h2v1h-2zM474 196h2v1h-2zM476 195h2v1h-2zM478 194h2v1h-2zM480 193h2v1h-2zM482 192h2v1h-2zM484 191h2v1h-2zM486 190h2v1h-2zM488 189h2v1h-2zM490 188h2v1h-2zM492 187h2v1h-2zM494 186h2v1h-2zM496 185h2v1h-2zM498 184h1v1h-1zM499 183h2v1h-2zM501 182h2v1h-2zM503 181h2v1h-2zM505 180h2v1h-2zM507 179h2v1h-2zM509 178h2v1h-2zM511 177h2v1h-2zM513 176h2v1h-2zM515 175h2v1h-2zM517 174h2v1h-2zM519 173h2v1h-2zM521 172h2v1h-2zM523 171h2v1h-2zM525 170h1v1h-1zM526 169h2v1h-2zM528 168h2v1h-2zM530 167h1v1h-1zM531 166h2v1h-2zM533 165h2v1h-2zM535 164h1v1h-1zM536 163h2v1h-2zM538 162h1v1h-1zM539 161h2v1h-2zM541 160h2v1h-2zM543 159h1v1h-1zM544 158h2v1h-2zM546 157h2v1h-2zM548 156h2v1h-2zM550 155h2v1h-2zM552 154h1v1h-1zM553 153h2v1h-2zM555 152h2v1h-2zM557 151h2v1h-2zM559 150h2v1h-2zM561 149h2v1h-2zM563 148h2v1h-2zM565 147h2v1h-2zM567 146h2v1h-2zM569 145h2v1h-2zM571 144h2v1h-2zM573 143h2v1h-2zM575 142h2v1h-2zM577 141h2v1h-2zM579 140h2v1h-2zM581 139h2v1h-2zM583 138h2v1h-2zM585 137h2v1h-2zM587 136h2v1h-2zM589 135h1v1h-1zM590 134h2v1h-2zM592 133h2v1h-2zM594 132h2v1h-2zM596 131h2v1h-2zM598 130h2v1h-2zM600 129h2v1h-2zM602 128h2v1h-2zM604 127h2v1h-2zM606 126h3v1h-3zM609 125h2v1h-2zM611 124h2v1h-2zM613 123h2v1h-2zM615 122h3v1h-3zM618 121h2v1h-2zM620 120h2v1h-2zM622 119h2v1h-2zM624 118h3v1h-3zM627 117h2v1h-2zM629 116h2v1h-2zM631 115h2v1h-2zM633 114h3v1h-3zM636 113h2v1h-2zM638 112h2v1h-2zM640 111h2v1h-2zM642 110h3v1h-3zM645 109h2v1h-2zM647 108h2v1h-2zM649 107h2v1h-2zM651 106h3v1h-3zM654 105h3v1h-3zM657 104h3v1h-3zM660 103h4v1h-4zM664 102h3v1h-3zM667 101h3v1h-3zM670 100h3v1h-3zM673 99h4v1h-4zM677 98h4v1h-4zM681 97h3v1h-3zM684 96h4v1h-4zM688 95h3v1h-3zM691 94h4v1h-4zM695 93h4v1h-4zM699 92h3v1h-3zM702 91h4v1h-4zM706 90h5v1h-5zM711 89h6v1h-6zM717 88h6v1h-6zM723 87h12v1h-12zM735 86h13v1h-13zM748 85h10v1h-10zM758 84h9v1h-9zM767 85h9v1h-9zM776 86h13v1h-13zM789 87h12v1h-12zM801 88h6v1h-6zM807 89h6v1h-6zM813 90h5v1h-5zM818 91h4v1h-4zM822 92h3v1h-3zM825 93h4v1h-4zM829 94h4v1h-4zM833 95h3v1h-3zM836 96h4v1h-4zM840 97h4v1h-4zM844 98h4v1h-4zM848 99h4v1h-4zM852 100h3v1h-3zM855 101h3v1h-3zM858 102h3v1h-3zM861 103h3v1h-3zM864 104h3v1h-3zM867 105h3v1h-3zM870 106h3v1h-3zM873 107h2v1h-2zM875 108h2v1h-2zM877 109h2v1h-2zM879 110h3v1h-3zM882 111h2v1h-2zM884 112h2v1h-2zM886 113h2v1h-2zM888 114h3v1h-3zM891 115h2v1h-2zM893 116h2v1h-2zM895 117h2v1h-2zM897 118h3v1h-3zM900 119h2v1h-2zM902 120h2v1h-2zM904 121h2v1h-2zM906 122h3v1h-3zM909 123h2v1h-2zM911 124h2v1h-2zM913 125h2v1h-2zM915 126h3v1h-3zM918 127h2v1h-2zM920 128h2v1h-2zM922 129h2v1h-2zM924 130h2v1h-2zM926 131h2v1h-2zM928 132h2v1h-2zM930 133h2v1h-2zM932 134h2v1h-2zM934 135h1v1h-1zM935 136h2v1h-2zM937 137h2v1h-2zM939 138h2v1h-2zM941 139h2v1h-2zM943 140h2v1h-2zM945 141h2v1h-2zM947 142h2v1h-2zM949 143h2v1h-2zM951 144h2v1h-2zM953 145h2v1h-2zM955 146h2v1h-2zM957 147h2v1h-2zM959 148h2v1h-2zM961 149h2v1h-2zM963 150h2v1h-2zM965 151h2v1h-2zM967 152h2v1h-2zM969 153h2v1h-2zM971 154h1v1h-1zM972 155h2v1h-2zM974 156h2v1h-2zM976 157h2v1h-2zM978 158h2v1h-2zM980 159h1v1h-1zM981 160h2v1h-2zM983 161h2v1h-2zM985 162h1v1h-1zM986 163h2v1h-2zM988 164h1v1h-1zM989 165h2v1h-2zM991 166h2v1h-2zM993 167h1v1h-1zM994 168h2v1h-2zM996 169h2v1h-2zM998 170h1v1h-1zM999 171h2v1h-2zM1001 172h2v1h-2zM1003 173h2v1h-2zM1005 174h2v1h-2zM1007 175h2v1h-2zM1009 176h2v1h-2zM1011 177h2v1h-2zM1013 178h2v1h-2zM1015 179h2v1h-2zM1017 180h2v1h-2zM1019 181h2v1h-2zM1021 182h2v1h-2zM1023 183h2v1h-2zM1025 184h2v1h-2zM1027 185h2v1h-2zM1029 186h2v1h-2zM1031 187h2v1h-2zM1033 188h2v1h-2zM1035 189h1v1h-1zM1036 190h2v1h-2zM1038 191h2v1h-2zM1040 192h2v1h-2zM1042 193h2v1h-2zM1044 194h2v1h-2zM1046 195h2v1h-2zM1048 196h2v1h-2zM1050 197h2v1h-2zM1052 198h3v1h-3zM1055 199h2v1h-2zM1057 200h2v1h-2zM1059 201h2v1h-2zM1061 202h3v1h-3zM1064 203h2v1h-2zM1066 204h2v1h-2zM1068 205h2v1h-2zM1070 206h3v1h-3zM1073 207h2v1h-2zM1075 208h2v1h-2zM1077 209h2v1h-2zM1079 210h3v1h-3zM1082 211h2v1h-2zM1084 212h2v1h-2zM1086 213h2v1h-2zM1088 214h3v1h-3zM1091 215h2v1h-2zM1093 216h2v1h-2zM1095 217h2v1h-2zM1097 218h3v1h-3zM1100 219h2v1h-2zM1102 220h2v1h-2zM1104 221h2v1h-2zM1106 222h3v1h-3zM1109 223h3v1h-3zM1112 224h2v1h-2zM1114 225h3v1h-3zM1117 226h3v1h-3zM1120 227h2v1h-2zM1122 228h3v1h-3zM1125 229h4v1h-4zM1129 230h4v1h-4zM1133 231h5v1h-5zM1138 232h4v1h-4zM1142 233h4v1h-4zM1146 234h4v1h-4zM1150 235h3v1h-3zM1153 236h4v1h-4zM1157 237h4v1h-4zM1161 238h1v1h-1z" fill="#ffffff"/>
<path d="M70 167h2v1h-2zM72 166h4v1h-4zM76 165h4v1h-4zM80 164h3v1h-3zM83 163h4v1h-4zM87 162h3v1h-3zM90 161h4v1h-4zM94 160h4v1h-4zM98 159h3v1h-3zM101 158h4v1h-4zM105 157h3v1h-3zM108 156h4v1h-4zM112 155h4v1h-4zM116 154h4v1h-4zM120 153h4v1h-4zM124 152h4v1h-4zM128 151h4v1h-4zM132 150h5v1h-5zM137 149h4v1h-4zM141 148h4v1h-4zM145 147h4v1h-4zM149 146h4v1h-4zM153 145h3v1h-3zM156 144h4v1h-4zM160 143h3v1h-3zM163 142h4v1h-4zM167 141h4v1h-4zM171 140h3v1h-3zM174 139h4v1h-4zM178 138h3v1h-3zM181 137h4v1h-4zM185 136h4v1h-4zM189 135h3v1h-3zM192 134h4v1h-4zM196 133h4v1h-4zM200 132h5v1h-5zM205 131h4v1h-4zM209 130h5v1h-5zM214 129h4v1h-4zM218 128h4v1h-4zM222 127h4v1h-4zM226 126h3v1h-3zM229 125h4v1h-4zM233 124h3v1h-3zM236 123h4v1h-4zM240 122h4v1h-4zM244 121h3v1h-3zM247 120h4v1h-4zM251 119h5v1h-5zM256 118h6v1h-6zM262 117h6v1h-6zM268 116h4v1h-4zM272 115h4v1h-4zM276 114h4v1h-4zM280 113h3v1h-3zM283 112h4v1h-4zM287 111h5v1h-5zM292 110h6v1h-6zM298 109h6v1h-6zM304 108h7v1h-7zM311 107h6v1h-6zM317 106h6v1h-6zM323 105h5v1h-5zM328 104h4v1h-4zM332 103h5v1h-5zM337 102h4v1h-4zM341 101h6v1h-6zM347 100h6v1h-6zM353 99h6v1h-6zM359 98h6v1h-6zM365 97h6v1h-6zM371 96h6v1h-6zM377 95h12v1h-12zM389 94h14v1h-14zM403 93h9v1h-9zM412 92h8v1h-8zM420 91h6v1h-6zM426 90h6v1h-6zM432 89h7v1h-7zM439 88h9v1h-9zM448 87h32v1h-32zM480 86h109v1h-109zM589 87h32v1h-32zM621 88h9v1h-9zM630 89h7v1h-7zM637 90h6v1h-6zM643 91h6v1h-6zM649 92h8v1h-8zM657 93h10v1h-10zM667 94h13v1h-13zM680 95h12v1h-12zM692 96h6v1h-6zM698 97h6v1h-6zM704 98h6v1h-6zM710 99h6v1h-6zM716 100h6v1h-6zM722 101h6v1h-6zM728 102h4v1h-4zM732 103h5v1h-5zM737 104h4v1h-4zM741 105h6v1h-6zM747 106h6v1h-6zM753 107h6v1h-6zM759 108h6v1h-6zM765 109h6v1h-6zM771 110h6v1h-6zM777 111h5v1h-5zM782 112h4v1h-4zM786 113h3v1h-3zM789 114h4v1h-4zM793 115h4v1h-4zM797 116h4v1h-4zM801 117h6v1h-6zM807 118h6v1h-6zM813 119h5v1h-5zM818 120h4v1h-4zM822 121h3v1h-3zM825 122h4v1h-4zM829 123h4v1h-4zM833 124h3v1h-3zM836 125h4v1h-4zM840 126h4v1h-4zM844 127h4v1h-4zM848 128h4v1h-4zM852 129h4v1h-4zM856 130h4v1h-4zM860 131h5v1h-5zM865 132h4v1h-4zM869 133h4v1h-4zM873 134h4v1h-4zM877 135h3v1h-3zM880 136h4v1h-4zM884 137h4v1h-4zM888 138h3v1h-3zM891 139h4v1h-4zM895 140h3v1h-3zM898 141h4v1h-4zM902 142h4v1h-4zM906 143h3v1h-3zM909 144h4v1h-4zM913 145h3v1h-3zM916 146h4v1h-4zM920 147h4v1h-4zM924 148h4v1h-4zM928 149h4v1h-4zM932 150h5v1h-5zM937 151h4v1h-4zM941 152h4v1h-4zM945 153h4v1h-4zM949 154h4v1h-4zM953 155h4v1h-4zM957 156h4v1h-4zM961 157h3v1h-3zM964 158h4v1h-4zM968 159h3v1h-3zM971 160h4v1h-4zM975 161h4v1h-4zM979 162h3v1h-3zM982 163h4v1h-4zM986 164h3v1h-3zM989 165h4v1h-4zM993 166h4v1h-4zM997 167h4v1h-4zM1001 168h4v1h-4zM1005 169h5v1h-5zM1010 170h4v1h-4zM1014 171h4v1h-4zM1018 172h4v1h-4zM1022 173h4v1h-4zM1026 174h4v1h-4zM1030 175h4v1h-4zM1034 176h3v1h-3zM1037 177h4v1h-4zM1041 178h3v1h-3zM1044 179h4v1h-4zM1048 180h4v1h-4zM1052 181h3v1h-3zM1055 182h4v1h-4zM1059 183h3v1h-3zM1062 184h4v1h-4zM1066 185h4v1h-4zM1070 186h3v1h-3zM1073 187h4v1h-4zM1077 188h3v1h-3zM1080 189h4v1h-4zM1084 190h4v1h-4zM1088 191h4v1h-4zM1092 192h4v1h-4zM1096 193h5v1h-5zM1101 194h4v1h-4zM1105 195h4v1h-4zM1109 196h4v1h-4zM1113 197h4v1h-4zM1117 198h4v1h-4zM1121 199h4v1h-4zM1125 200h3v1h-3zM1128 201h4v1h-4zM1132 202h3v1h-3zM1135 203h4v1h-4zM1139 204h4v1h-4zM1143 205h3v1h-3zM1146 206h4v1h-4zM1150 207h3v1h-3zM1153 208h4v1h-4zM1157 209h4v1h-4zM1161 210h1v1h-1z" fill="#ffff00"/>
<path d="M70 89h41v1h-41zM111 88h10v1h-10zM121 87h123v1h-123zM244 86h581v1h-581zM825 87h123v1h-123zM948 88h10v1h-10zM958 89h86v1h-86zM1044 90h68v1h-68zM1112 91h10v1h-10zM1122 92h40v1h-40z" fill="#00ffff"/>
<rect x="70" y="116" width="36" height="16" fill="rgba(255,255,255,0.502)"/>
<rect x="106" y="116" width="55" height="16" fill="rgba(0,255,0,0.502)"/>
<rect x="161" y="116" width="55" height="16" fill="rgba(255,255,255,0.502)"/>
<rect x="216" y="116" width="54" height="16" fill="rgba(0,255,0,0.502)"/>
<rect x="270" y="116" width="55" height="16" fill="rgba(255,255,255,0.502)"/>
<rect x="325" y="116" width="54" height="16" fill="rgba(0,255,0,0.502)"/>
<rect x="379" y="116" width="55" height="16" fill="rgba(255,255,255,0.502)"/>
<rect x="434" y="116" width="55" height="16" fill="rgba(0,255,0,0.502)"/>
<rect x="489" y="116" width="54" height="16" fill="rgba(255,255,255,0.502)"/>
<rect x="543" y="116" width="55" height="16" fill="rgba(0,255,0,0.502)"/>
<rect x="598" y="116" width="54" height="16" fill="rgba(255,255,255,0.502)"/>
<rect x="652" y="116" width="55" height="16" fill="rgba(0,255,0,0.502)"/>
<rect x="707" y="116" width="55" height="16" fill="rgba(255,255,255,0.502)"/>
<rect x="762" y="116" width="54" height="16" fill="rgba(0,255,0,0.502)"/>
<rect x="816" y="116" width="55" height="16" fill="rgba(255,255,255,0.502)"/>
<rect x="871" y="116" width="54" height="16" fill="rgba(0,255,0,0.502)"/>
<rect x="925" y="116" width="55" height="16" fill="rgba(255,255,255,0.502)"/>
<rect x="980" y="116" width="55" height="16" fill="rgba(0,255,0,0.502)"/>
<rect x="1035" y="116" width="54" height="16" fill="rgba(255,255,255,0.502)"/>
<rect x="1089" y="116" width="55" height="16" fill="rgba(0,255,0,0.502)"/>
<rect x="1144" y="116" width="18" height="16" fill="rgba(255,255,255,0.502)"/>
<path d="M70 210h18v1h-18zM88 226h91v1h-91zM179 210h91v1h-91zM270 226h91v1h-91zM361 210h91v1h-91zM452 226h91v1h-91zM543 210h91v1h-91zM634 226h91v1h-91zM725 210h91v1h-91zM816 226h91v1h-91zM907 210h91v1h-91zM998 226h91v1h-91zM1089 210h73v1h-73z" fill="#f59646"/>
<path d="M70 189h2v53h-2zM88 189h2v53h-2zM106 189h2v53h-2zM125 189h2v53h-2zM143 189h2v53h-2zM161 189h2v53h-2zM179 189h2v53h-2zM197 189h2v53h-2zM216 189h2v53h-2zM234 189h2v53h-2zM252 189h2v53h-2zM270 189h2v53h-2zM288 189h2v53h-2zM307 189h2v53h-2zM325 189h2v53h-2zM343 189h2v53h-2zM361 189h2v53h-2zM379 189h2v53h-2zM398 189h2v53h-2zM416 189h2v53h-2zM434 189h2v53h-2zM452 189h2v53h-2zM470 189h2v53h-2zM489 189h2v53h-2zM507 189h2v53h-2zM525 189h2v53h-2zM543 189h2v53h-2zM561 189h2v53h-2zM580 189h2v53h-2zM598 189h2v53h-2zM616 189h2v53h-2zM634 189h2v53h-2zM652 189h2v53h-2zM671 189h2v53h-2zM689 189h2v53h-2zM707 189h2v53h-2zM725 189h2v53h-2zM743 189h2v53h-2zM762 189h2v53h-2zM780 189h2v53h-2zM798 189h2v53h-2zM816 189h2v53h-2zM834 189h2v53h-2zM853 189h2v53h-2zM871 189h2v53h-2zM889 189h2v53h-2zM907 189h2v53h-2zM925 189h2v53h-2zM944 189h2v53h-2zM962 189h2v53h-2zM980 189h2v53h-2zM998 189h2v53h-2zM1016 189h2v53h-2zM1035 189h2v53h-2zM1053 189h2v53h-2zM1071 189h2v53h-2zM1089 189h2v53h-2zM1107 189h2v53h-2zM1126 189h2v53h-2zM1144 189h2v53h-2z" fill="#ff00ff"/>
<rect x="69.5" y="83.5" width="1094" height="160" fill="none" stroke="#808080" shape-rendering="crispEdges"/>
<path d="M1170 84h12v1h-11v157h12v1h-13z" fill="#00ff00"/>
<rect x="124" y="84" width="1" height="159" fill="#ff0000"/>
<polygon points="118.5,84 130.5,84 124.5,95.5" fill="#ff0000" shape-rendering="crispEdges"/>
<polygon points="118.5,243 130.5,243 124.5,231.5" fill="#ff0000" shape-rendering="crispEdges"/>
<text font-family="Liberation Sans, sans-serif" font-size="12.5" fill="#00ff00" y="60" x="91.39 98.34 105.30 112.25 120.01 124.30 131.25 139.02 143.30 150.26">2020/02/25</text>
<text font-family="Liberation Sans, sans-serif" font-size="12.5" fill="#00ff00" y="75" x="98.54 105.50 113.16 117.35 124.30 131.97 136.15 143.10">11:24:50</text>
<rect x="1107" y="84" width="1" height="159" fill="#ff0000"/>
<polygon points="1101.5,84 1113.5,84 1107.5,95.5" fill="#ff0000" shape-rendering="crispEdges"/>
<polygon points="1101.5,243 1113.5,243 1107.5,231.5" fill="#ff0000" shape-rendering="crispEdges"/>
<text font-family="Liberation Sans, sans-serif" font-size="12.5" fill="#00ff00" y="60" x="1074.39 1081.34 1088.30 1095.25 1103.01 1107.30 1114.25 1122.02 1126.30 1133.26">2020/02/25</text>
<text font-family="Liberation Sans, sans-serif" font-size="12.5" fill="#00ff00" y="75" x="1081.54 1088.50 1096.16 1100.35 1107.30 1114.97 1119.15 1126.10">11:25:44</text>
<text font-family="Liberation Sans, sans-serif" font-size="12.5" fill="#00ff00" y="261.3" x="37.39 44.34 51.30 58.25 66.01 70.30 77.25 85.02 89.30 96.26">2020/02/25</text>
<text font-family="Liberation Sans, sans-serif" font-size="12.5" fill="#00ff00" y="276.3" x="44.54 51.50 59.16 63.35 70.30 77.97 82.15 89.10">11:24:48</text>
<text font-family="Liberation Sans, sans-serif" font-size="12.5" fill="#00ff00" y="261.3" x="146.59 153.54 160.50 167.45 175.21 179.50 186.45 194.22 198.50 205.46">2020/02/25</text>
<text font-family="Liberation Sans, sans-serif" font-size="12.5" fill="#00ff00" y="276.3" x="153.74 160.70 168.36 172.55 179.50 187.17 191.35 198.30">11:24:54</text>
<text font-family="Liberation Sans, sans-serif" font-size="12.5" fill="#00ff00" y="261.3" x="255.79 262.74 269.70 276.65 284.41 288.70 295.65 303.42 307.70 314.66">2020/02/25</text>
<text font-family="Liberation Sans, sans-serif" font-size="12.5" fill="#00ff00" y="276.3" x="262.94 269.90 277.56 281.75 288.70 296.37 300.55 307.50">11:25:00</text>
<text font-family="Liberation Sans, sans-serif" font-size="12.5" fill="#00ff00" y="261.3" x="364.99 371.94 378.90 385.85 393.61 397.90 404.85 412.62 416.90 423.86">2020/02/25</text>
<text font-family="Liberation Sans, sans-serif" font-size="12.5" fill="#00ff00" y="276.3" x="372.14 379.10 386.76 390.95 397.90 405.57 409.75 416.70">11:25:06</text>
<text font-family="Liberation Sans, sans-serif" font-size="12.5" fill="#00ff00" y="261.3" x="474.19 481.14 488.10 495.05 502.81 507.10 514.05 521.82 526.10 533.06">2020/02/25</text>
<text font-family="Liberation Sans, sans-serif" font-size="12.5" fill="#00ff00" y="276.3" x="481.34 488.30 495.96 500.15 507.10 514.77 518.95 525.90">11:25:12</text>
<text font-family="Liberation Sans, sans-serif" font-size="12.5" fill="#00ff00" y="261.3" x="583.39 590.34 597.30 604.25 612.01 616.30 623.25 631.02 635.30 642.26">2020/02/25</text>
<text font-family="Liberation Sans, sans-serif" font-size="12.5" fill="#00ff00" y="276.3" x="590.54 597.50 605.16 609.35 616.30 623.97 628.15 635.10">11:25:18</text>
<text font-family="Liberation Sans, sans-serif" font-size="12.5" fill="#00ff00" y="261.3" x="692.59 699.54 706.50 713.45 721.21 725.50 732.45 740.22 744.50 751.46">2020/02/25</text>
<text font-family="Liberation Sans, sans-serif" font-size="12.5" fill="#00ff00" y="276.3" x="699.74 706.70 714.36 718.55 725.50 733.17 737.35 744.30">11:25:24</text>
<text font-family="Liberation Sans, sans-serif" font-size="12.5" fill="#00ff00" y="261.3" x="801.79 808.74 815.70 822.65 830.41 834.70 841.65 849.42 853.70 860.66">2020/02/25</text>
<text font-family="Liberation Sans, sans-serif" font-size="12.5" fill="#00ff00" y="276.3" x="808.94 815.90 823.56 827.75 834.70 842.37 846.55 853.50">11:25:30</text>
<text font-family="Liberation Sans, sans-serif" font-size="12.5" fill="#00ff00" y="261.3" x="910.99 917.94 924.90 931.85 939.61 943.90 950.85 958.62 962.90 969.86">2020/02/25</text>
<text font-family="Liberation Sans, sans-serif" font-size="12.5" fill="#00ff00" y="276.3" x="918.14 925.10 932.76 936.95 943.90 951.57 955.75 962.70">11:25:36</text>
<text font-family="Liberation Sans, sans-serif" font-size="12.5" fill="#00ff00" y="261.3" x="1020.19 1027.14 1034.10 1041.05 1048.81 1053.10 1060.05 1067.82 1072.10 1079.06">2020/02/25</text>
<text font-family="Liberation Sans, sans-serif" font-size="12.5" fill="#00ff00" y="276.3" x="1027.34 1034.30 1041.96 1046.15 1053.10 1060.77 1064.95 1071.90">11:25:42</text>
<text font-family="Liberation Sans, sans-serif" font-size="12.5" fill="#00ff00" y="261.3" x="1129.39 1136.34 1143.30 1150.25 1158.01 1162.30 1169.25 1177.02 1181.30 1188.26">2020/02/25</text>
<text font-family="Liberation Sans, sans-serif" font-size="12.5" fill="#00ff00" y="276.3" x="1136.54 1143.50 1151.16 1155.35 1162.30 1169.97 1174.15 1181.10">11:25:48</text>
<text font-family="'Liberation Sans', 'Noto Sans CJK JP', sans-serif" font-size="12.5" fill="#00ff00" x="599.41" y="301.3" textLength="26" lengthAdjust="spacingAndGlyphs">グラフ</text>
<text font-family="Liberation Sans, sans-serif" font-size="12.5" fill="#00ff00" y="301.3" x="625.00">2</text>
<text font-family="Liberation Sans, sans-serif" font-size="12.5" fill="#00ff00" y="342" x="42.34 49.30 56.25">100</text>
<text font-family="Liberation Sans, sans-serif" font-size="12.5" fill="#00ff00" y="358" x="49.30 56.25">90</text>
<text font-family="Liberation Sans, sans-serif" font-size="12.5" fill="#00ff00" y="374" x="49.30 56.25">80</text>
<text font-family="Liberation Sans, sans-serif" font-size="12.5" fill="#00ff00" y="389" x="49.30 56.25">70</text>
<text font-family="Liberation Sans, sans-serif" font-size="12.5" fill="#00ff00" y="405" x="49.30 56.25">60</text>
<text font-family="Liberation Sans, sans-serif" font-size="12.5" fill="#00ff00" y="421" x="49.30 56.25">50</text>
<text font-family="Liberation Sans, sans-serif" font-size="12.5" fill="#00ff00" y="436" x="49.30 56.25">40</text>
<text font-family="Liberation Sans, sans-serif" font-size="12.5" fill="#00ff00" y="452" x="49.30 56.25">30</text>
<text font-family="Liberation Sans, sans-serif" font-size="12.5" fill="#00ff00" y="468" x="49.30 56.25">20</text>
<text font-family="Liberation Sans, sans-serif" font-size="12.5" fill="#00ff00" y="484" x="49.30 56.25">10</text>
<text font-family="Liberation Sans, sans-serif" font-size="12.5" fill="#00ff00" y="499" x="56.25">0</text>
<g transform="translate(18.3 440.2) rotate(-90)">
<text font-family="'Liberation Sans', 'Noto Sans CJK JP', sans-serif" font-size="12.5" fill="#00ff00" x="-0.95" y="0" textLength="37" lengthAdjust="spacingAndGlyphs">タイトル</text>
<text font-family="Liberation Sans, sans-serif" font-size="12.5" fill="#00ff00" y="0" x="36.00 42.95">01</text>
</g>
<line x1="71" y1="351.5" x2="1163" y2="351.5" stroke="#b4b4b4" stroke-dasharray="1 1" shape-rendering="crispEdges"/>
<line x1="71" y1="367.5" x2="1163" y2="367.5" stroke="#b4b4b4" stroke-dasharray="1 1" shape-rendering="crispEdges"/>
<line x1="71" y1="383.5" x2="1163" y2="383.5" stroke="#b4b4b4" stroke-dasharray="1 1" shape-rendering="crispEdges"/>
<line x1="71" y1="399.5" x2="1163" y2="399.5" stroke="#b4b4b4" stroke-dasharray="1 1" shape-rendering="crispEdges"/>
<line x1="71" y1="415.5" x2="1163" y2="415.5" stroke="#b4b4b4" stroke-dasharray="1 1" shape-rendering="crispEdges"/>
<line x1="71" y1="431.5" x2="1163" y2="431.5" stroke="#b4b4b4" stroke-dasharray="1 1" shape-rendering="crispEdges"/>
<line x1="71" y1="447.5" x2="1163" y2="447.5" stroke="#b4b4b4" stroke-dasharray="1 1" shape-rendering="crispEdges"/>
<line x1="71" y1="463.5" x2="1163" y2="463.5" stroke="#b4b4b4" stroke-dasharray="1 1" shape-rendering="crispEdges"/>
<line x1="71" y1="479.5" x2="1163" y2="479.5" stroke="#b4b4b4" stroke-dasharray="1 1" shape-rendering="crispEdges"/>
<line x1="178.5" y1="337" x2="178.5" y2="495" stroke="#b4b4b4" stroke-dasharray="1 1" shape-rendering="crispEdges"/>
<line x1="288.5" y1="337" x2="288.5" y2="495" stroke="#b4b4b4" stroke-dasharray="1 1" shape-rendering="crispEdges"/>
<line x1="397.5" y1="337" x2="397.5" y2="495" stroke="#b4b4b4" stroke-dasharray="1 1" shape-rendering="crispEdges"/>
<line x1="507.5" y1="337" x2="507.5" y2="495" stroke="#b4b4b4" stroke-dasharray="1 1" shape-rendering="crispEdges"/>
<line x1="616.5" y1="337" x2="616.5" y2="495" stroke="#b4b4b4" stroke-dasharray="1 1" shape-rendering="crispEdges"/>
<line x1="725.5" y1="337" x2="725.5" y2="495" stroke="#b4b4b4" stroke-dasharray="1 1" shape-rendering="crispEdges"/>
<line x1="835.5" y1="337" x2="835.5" y2="495" stroke="#b4b4b4" stroke-dasharray="1 1" shape-rendering="crispEdges"/>
<line x1="944.5" y1="337" x2="944.5" y2="495" stroke="#b4b4b4" stroke-dasharray="1 1" shape-rendering="crispEdges"/>
<line x1="1054.5" y1="337" x2="1054.5" y2="495" stroke="#b4b4b4" stroke-dasharray="1 1" shape-rendering="crispEdges"/>
<path d="M70 393h1v2h-1zM71 395h1v3h-1zM72 398h1v2h-1zM73 400h1v3h-1zM74 403h1v3h-1zM75 406h1v3h-1zM76 409h1v3h-1zM77 412h1v2h-1zM78 414h1v3h-1zM79 417h1v3h-1zM80 420h1v3h-1zM81 423h1v2h-1zM82 425h1v3h-1zM83 428h1v3h-1zM84 431h1v3h-1zM85 434h1v3h-1zM86 437h1v2h-1zM87 439h1v3h-1zM88 442h1v3h-1zM89 445h1v2h-1zM90 447h1v2h-1zM91 449h1v2h-1zM92 451h1v2h-1zM93 453h1v2h-1zM94 455h1v2h-1zM95 457h1v2h-1zM96 459h1v2h-1zM97 461h1v3h-1zM98 464h1v2h-1zM99 466h1v2h-1zM100 468h1v2h-1zM101 470h1v2h-1zM102 472h1v2h-1zM103 474h1v2h-1zM104 476h1v2h-1zM105 478h1v2h-1zM106 480h1v2h-1zM107 482h2v1h-2zM109 483h1v1h-1zM110 484h2v1h-2zM112 485h1v1h-1zM113 486h2v1h-2zM115 487h1v1h-1zM116 488h1v1h-1zM117 489h2v1h-2zM119 490h1v1h-1zM120 491h2v1h-2zM122 492h1v1h-1zM123 493h2v1h-2zM125 494h1v1h-1zM126 493h1v1h-1zM127 492h2v1h-2zM129 491h1v1h-1zM130 490h1v1h-1zM131 489h1v1h-1zM132 488h1v1h-1zM133 487h2v1h-2zM135 486h1v1h-1zM136 485h1v1h-1zM137 484h1v1h-1zM138 483h1v1h-1zM139 482h2v1h-2zM141 481h1v1h-1zM142 480h1v1h-1zM143 478h1v2h-1zM144 476h1v2h-1zM145 474h1v2h-1zM146 472h1v2h-1zM147 470h1v2h-1zM148 467h1v3h-1zM149 465h1v2h-1zM150 463h1v2h-1zM151 461h1v2h-1zM152 458h1v3h-1zM153 456h1v2h-1zM154 454h1v2h-1zM155 452h1v2h-1zM156 450h1v2h-1zM157 447h1v3h-1zM158 445h1v2h-1zM159 443h1v2h-1zM160 441h1v2h-1zM161 438h1v3h-1zM162 435h1v3h-1zM163 433h1v2h-1zM164 430h1v3h-1zM165 427h1v3h-1zM166 425h1v2h-1zM167 422h1v3h-1zM168 419h1v3h-1zM169 416h1v3h-1zM170 414h1v2h-1zM171 411h1v3h-1zM172 408h1v3h-1zM173 405h1v3h-1zM174 403h1v2h-1zM175 400h1v3h-1zM176 397h1v3h-1zM177 395h1v2h-1zM178 392h1v3h-1zM179 389h1v3h-1zM180 387h1v2h-1zM181 385h1v2h-1zM182 383h1v2h-1zM183 381h1v2h-1zM184 379h1v2h-1zM185 377h1v2h-1zM186 375h1v2h-1zM187 373h1v2h-1zM188 370h1v3h-1zM189 368h1v2h-1zM190 366h1v2h-1zM191 364h1v2h-1zM192 362h1v2h-1zM193 360h1v2h-1zM194 358h1v2h-1zM195 356h1v2h-1zM196 354h1v2h-1zM197 352h1v2h-1zM198 351h2v1h-2zM200 350h1v1h-1zM201 349h1v1h-1zM202 348h2v1h-2zM204 347h1v1h-1zM205 346h1v1h-1zM206 345h2v1h-2zM208 344h1v1h-1zM209 343h1v1h-1zM210 342h2v1h-2zM212 341h1v1h-1zM213 340h1v1h-1zM214 339h2v1h-2zM216 338h1v1h-1zM217 339h1v1h-1zM218 340h1v1h-1zM219 341h2v1h-2zM221 342h1v1h-1zM222 343h1v1h-1zM223 344h1v1h-1zM224 345h1v1h-1zM225 346h2v1h-2zM227 347h1v1h-1zM228 348h1v1h-1zM229 349h1v1h-1zM230 350h1v1h-1zM231 351h2v1h-2zM233 352h1v1h-1zM234 353h1v2h-1zM235 355h1v2h-1zM236 357h1v2h-1zM237 359h1v2h-1zM238 361h1v2h-1zM239 363h1v3h-1zM240 366h1v2h-1zM241 368h1v2h-1zM242 370h1v2h-1zM243 372h1v3h-1zM244 375h1v2h-1zM245 377h1v2h-1zM246 379h1v2h-1zM247 381h1v2h-1zM248 383h1v3h-1zM249 386h1v2h-1zM250 388h1v2h-1zM251 390h1v2h-1zM252 392h1v3h-1zM253 395h1v3h-1zM254 398h1v2h-1zM255 400h1v3h-1zM256 403h1v3h-1zM257 406h1v3h-1zM258 409h1v3h-1zM259 412h1v2h-1zM260 414h1v3h-1zM261 417h1v3h-1zM262 420h1v3h-1zM263 423h1v2h-1zM264 425h1v3h-1zM265 428h1v3h-1zM266 431h1v3h-1zM267 434h1v3h-1zM268 437h1v2h-1zM269 439h1v3h-1zM270 442h1v3h-1zM271 445h1v2h-1zM272 447h1v2h-1zM273 449h1v2h-1zM274 451h1v2h-1zM275 453h1v2h-1zM276 455h1v2h-1zM277 457h1v2h-1zM278 459h1v2h-1zM279 461h1v3h-1zM280 464h1v2h-1zM281 466h1v2h-1zM282 468h1v2h-1zM283 470h1v2h-1zM284 472h1v2h-1zM285 474h1v2h-1zM286 476h1v2h-1zM287 478h1v2h-1zM288 480h1v2h-1zM289 482h2v1h-2zM291 483h1v1h-1zM292 484h2v1h-2zM294 485h1v1h-1zM295 486h2v1h-2zM297 487h1v1h-1zM298 488h1v1h-1zM299 489h2v1h-2zM301 490h1v1h-1zM302 491h2v1h-2zM304 492h1v1h-1zM305 493h2v1h-2zM307 494h1v1h-1zM308 493h1v1h-1zM309 492h2v1h-2zM311 491h1v1h-1zM312 490h1v1h-1zM313 489h1v1h-1zM314 488h1v1h-1zM315 487h2v1h-2zM317 486h1v1h-1zM318 485h1v1h-1zM319 484h1v1h-1zM320 483h1v1h-1zM321 482h2v1h-2zM323 481h1v1h-1zM324 480h1v1h-1zM325 478h1v2h-1zM326 476h1v2h-1zM327 474h1v2h-1zM328 472h1v2h-1zM329 470h1v2h-1zM330 467h1v3h-1zM331 465h1v2h-1zM332 463h1v2h-1zM333 461h1v2h-1zM334 458h1v3h-1zM335 456h1v2h-1zM336 454h1v2h-1zM337 452h1v2h-1zM338 450h1v2h-1zM339 447h1v3h-1zM340 445h1v2h-1zM341 443h1v2h-1zM342 441h1v2h-1zM343 438h1v3h-1zM344 435h1v3h-1zM345 433h1v2h-1zM346 430h1v3h-1zM347 427h1v3h-1zM348 425h1v2h-1zM349 422h1v3h-1zM350 419h1v3h-1zM351 416h1v3h-1zM352 414h1v2h-1zM353 411h1v3h-1zM354 408h1v3h-1zM355 405h1v3h-1zM356 403h1v2h-1zM357 400h1v3h-1zM358 397h1v3h-1zM359 395h1v2h-1zM360 392h1v3h-1zM361 389h1v3h-1zM362 387h1v2h-1zM363 385h1v2h-1zM364 383h1v2h-1zM365 381h1v2h-1zM366 379h1v2h-1zM367 377h1v2h-1zM368 375h1v2h-1zM369 373h1v2h-1zM370 370h1v3h-1zM371 368h1v2h-1zM372 366h1v2h-1zM373 364h1v2h-1zM374 362h1v2h-1zM375 360h1v2h-1zM376 358h1v2h-1zM377 356h1v2h-1zM378 354h1v2h-1zM379 352h1v2h-1zM380 351h2v1h-2zM382 350h1v1h-1zM383 349h1v1h-1zM384 348h2v1h-2zM386 347h1v1h-1zM387 346h1v1h-1zM388 345h2v1h-2zM390 344h1v1h-1zM391 343h1v1h-1zM392 342h2v1h-2zM394 341h1v1h-1zM395 340h1v1h-1zM396 339h2v1h-2zM398 338h1v1h-1zM399 339h1v1h-1zM400 340h1v1h-1zM401 341h2v1h-2zM403 342h1v1h-1zM404 343h1v1h-1zM405 344h1v1h-1zM406 345h1v1h-1zM407 346h2v1h-2zM409 347h1v1h-1zM410 348h1v1h-1zM411 349h1v1h-1zM412 350h1v1h-1zM413 351h2v1h-2zM415 352h1v1h-1zM416 353h1v2h-1zM417 355h1v2h-1zM418 357h1v2h-1zM419 359h1v2h-1zM420 361h1v2h-1zM421 363h1v3h-1zM422 366h1v2h-1zM423 368h1v2h-1zM424 370h1v2h-1zM425 372h1v3h-1zM426 375h1v2h-1zM427 377h1v2h-1zM428 379h1v2h-1zM429 381h1v2h-1zM430 383h1v3h-1zM431 386h1v2h-1zM432 388h1v2h-1zM433 390h1v2h-1zM434 392h1v3h-1zM435 395h1v3h-1zM436 398h1v2h-1zM437 400h1v3h-1zM438 403h1v3h-1zM439 406h1v3h-1zM440 409h1v3h-1zM441 412h1v2h-1zM442 414h1v3h-1zM443 417h1v3h-1zM444 420h1v3h-1zM445 423h1v2h-1zM446 425h1v3h-1zM447 428h1v3h-1zM448 431h1v3h-1zM449 434h1v3h-1zM450 437h1v2h-1zM451 439h1v3h-1zM452 442h1v3h-1zM453 445h1v2h-1zM454 447h1v2h-1zM455 449h1v2h-1zM456 451h1v2h-1zM457 453h1v2h-1zM458 455h1v2h-1zM459 457h1v2h-1zM460 459h1v2h-1zM461 461h1v3h-1zM462 464h1v2h-1zM463 466h1v2h-1zM464 468h1v2h-1zM465 470h1v2h-1zM466 472h1v2h-1zM467 474h1v2h-1zM468 476h1v2h-1zM469 478h1v2h-1zM470 480h1v2h-1zM471 482h2v1h-2zM473 483h1v1h-1zM474 484h2v1h-2zM476 485h1v1h-1zM477 486h2v1h-2zM479 487h1v1h-1zM480 488h1v1h-1zM481 489h2v1h-2zM483 490h1v1h-1zM484 491h2v1h-2zM486 492h1v1h-1zM487 493h2v1h-2zM489 494h1v1h-1zM490 493h1v1h-1zM491 492h2v1h-2zM493 491h1v1h-1zM494 490h1v1h-1zM495 489h1v1h-1zM496 488h1v1h-1zM497 487h2v1h-2zM499 486h1v1h-1zM500 485h1v1h-1zM501 484h1v1h-1zM502 483h1v1h-1zM503 482h2v1h-2zM505 481h1v1h-1zM506 480h1v1h-1zM507 478h1v2h-1zM508 476h1v2h-1zM509 474h1v2h-1zM510 472h1v2h-1zM511 470h1v2h-1zM512 467h1v3h-1zM513 465h1v2h-1zM514 463h1v2h-1zM515 461h1v2h-1zM516 458h1v3h-1zM517 456h1v2h-1zM518 454h1v2h-1zM519 452h1v2h-1zM520 450h1v2h-1zM521 447h1v3h-1zM522 445h1v2h-1zM523 443h1v2h-1zM524 441h1v2h-1zM525 438h1v3h-1zM526 435h1v3h-1zM527 433h1v2h-1zM528 430h1v3h-1zM529 427h1v3h-1zM530 425h1v2h-1zM531 422h1v3h-1zM532 419h1v3h-1zM533 416h1v3h-1zM534 414h1v2h-1zM535 411h1v3h-1zM536 408h1v3h-1zM537 405h1v3h-1zM538 403h1v2h-1zM539 400h1v3h-1zM540 397h1v3h-1zM541 395h1v2h-1zM542 392h1v3h-1zM543 389h1v3h-1zM544 387h1v2h-1zM545 385h1v2h-1zM546 383h1v2h-1zM547 381h1v2h-1zM548 379h1v2h-1zM549 377h1v2h-1zM550 375h1v2h-1zM551 373h1v2h-1zM552 370h1v3h-1zM553 368h1v2h-1zM554 366h1v2h-1zM555 364h1v2h-1zM556 362h1v2h-1zM557 360h1v2h-1zM558 358h1v2h-1zM559 356h1v2h-1zM560 354h1v2h-1zM561 352h1v2h-1zM562 351h2v1h-2zM564 350h1v1h-1zM565 349h1v1h-1zM566 348h2v1h-2zM568 347h1v1h-1zM569 346h1v1h-1zM570 345h2v1h-2zM572 344h1v1h-1zM573 343h1v1h-1zM574 342h2v1h-2zM576 341h1v1h-1zM577 340h1v1h-1zM578 339h2v1h-2zM580 338h1v1h-1zM581 339h1v1h-1zM582 340h1v1h-1zM583 341h2v1h-2zM585 342h1v1h-1zM586 343h1v1h-1zM587 344h1v1h-1zM588 345h1v1h-1zM589 346h2v1h-2zM591 347h1v1h-1zM592 348h1v1h-1zM593 349h1v1h-1zM594 350h1v1h-1zM595 351h2v1h-2zM597 352h1v1h-1zM598 353h1v2h-1zM599 355h1v2h-1zM600 357h1v2h-1zM601 359h1v2h-1zM602 361h1v2h-1zM603 363h1v3h-1zM604 366h1v2h-1zM605 368h1v2h-1zM606 370h1v2h-1zM607 372h1v3h-1zM608 375h1v2h-1zM609 377h1v2h-1zM610 379h1v2h-1zM611 381h1v2h-1zM612 383h1v3h-1zM613 386h1v2h-1zM614 388h1v2h-1zM615 390h1v2h-1zM616 392h1v3h-1zM617 395h1v3h-1zM618 398h1v2h-1zM619 400h1v3h-1zM620 403h1v3h-1zM621 406h1v3h-1zM622 409h1v3h-1zM623 412h1v2h-1zM624 414h1v3h-1zM625 417h1v3h-1zM626 420h1v3h-1zM627 423h1v2h-1zM628 425h1v3h-1zM629 428h1v3h-1zM630 431h1v3h-1zM631 434h1v3h-1zM632 437h1v2h-1zM633 439h1v3h-1zM634 442h1v3h-1zM635 445h1v2h-1zM636 447h1v2h-1zM637 449h1v2h-1zM638 451h1v2h-1zM639 453h1v2h-1zM640 455h1v2h-1zM641 457h1v2h-1zM642 459h1v2h-1zM643 461h1v3h-1zM644 464h1v2h-1zM645 466h1v2h-1zM646 468h1v2h-1zM647 470h1v2h-1zM648 472h1v2h-1zM649 474h1v2h-1zM650 476h1v2h-1zM651 478h1v2h-1zM652 480h1v2h-1zM653 482h2v1h-2zM655 483h1v1h-1zM656 484h2v1h-2zM658 485h1v1h-1zM659 486h2v1h-2zM661 487h1v1h-1zM662 488h1v1h-1zM663 489h2v1h-2zM665 490h1v1h-1zM666 491h2v1h-2zM668 492h1v1h-1zM669 493h2v1h-2zM671 494h1v1h-1zM672 493h1v1h-1zM673 492h2v1h-2zM675 491h1v1h-1zM676 490h1v1h-1zM677 489h1v1h-1zM678 488h1v1h-1zM679 487h2v1h-2zM681 486h1v1h-1zM682 485h1v1h-1zM683 484h1v1h-1zM684 483h1v1h-1zM685 482h2v1h-2zM687 481h1v1h-1zM688 480h1v1h-1zM689 478h1v2h-1zM690 476h1v2h-1zM691 474h1v2h-1zM692 472h1v2h-1zM693 470h1v2h-1zM694 467h1v3h-1zM695 465h1v2h-1zM696 463h1v2h-1zM697 461h1v2h-1zM698 458h1v3h-1zM699 456h1v2h-1zM700 454h1v2h-1zM701 452h1v2h-1zM702 450h1v2h-1zM703 447h1v3h-1zM704 445h1v2h-1zM705 443h1v2h-1zM706 441h1v2h-1zM707 438h1v3h-1zM708 435h1v3h-1zM709 433h1v2h-1zM710 430h1v3h-1zM711 427h1v3h-1zM712 425h1v2h-1zM713 422h1v3h-1zM714 419h1v3h-1zM715 416h1v3h-1zM716 414h1v2h-1zM717 411h1v3h-1zM718 408h1v3h-1zM719 405h1v3h-1zM720 403h1v2h-1zM721 400h1v3h-1zM722 397h1v3h-1zM723 395h1v2h-1zM724 392h1v3h-1zM725 389h1v3h-1zM726 387h1v2h-1zM727 385h1v2h-1zM728 383h1v2h-1zM729 381h1v2h-1zM730 379h1v2h-1zM731 377h1v2h-1zM732 375h1v2h-1zM733 373h1v2h-1zM734 370h1v3h-1zM735 368h1v2h-1zM736 366h1v2h-1zM737 364h1v2h-1zM738 362h1v2h-1zM739 360h1v2h-1zM740 358h1v2h-1zM741 356h1v2h-1zM742 354h1v2h-1zM743 352h1v2h-1zM744 351h2v1h-2zM746 350h1v1h-1zM747 349h1v1h-1zM748 348h2v1h-2zM750 347h1v1h-1zM751 346h1v1h-1zM752 345h2v1h-2zM754 344h1v1h-1zM755 343h1v1h-1zM756 342h2v1h-2zM758 341h1v1h-1zM759 340h1v1h-1zM760 339h2v1h-2zM762 338h1v1h-1zM763 339h1v1h-1zM764 340h1v1h-1zM765 341h2v1h-2zM767 342h1v1h-1zM768 343h1v1h-1zM769 344h1v1h-1zM770 345h1v1h-1zM771 346h2v1h-2zM773 347h1v1h-1zM774 348h1v1h-1zM775 349h1v1h-1zM776 350h1v1h-1zM777 351h2v1h-2zM779 352h1v1h-1zM780 353h1v2h-1zM781 355h1v2h-1zM782 357h1v2h-1zM783 359h1v2h-1zM784 361h1v2h-1zM785 363h1v3h-1zM786 366h1v2h-1zM787 368h1v2h-1zM788 370h1v2h-1zM789 372h1v3h-1zM790 375h1v2h-1zM791 377h1v2h-1zM792 379h1v2h-1zM793 381h1v2h-1zM794 383h1v3h-1zM795 386h1v2h-1zM796 388h1v2h-1zM797 390h1v2h-1zM798 392h1v3h-1zM799 395h1v3h-1zM800 398h1v2h-1zM801 400h1v3h-1zM802 403h1v3h-1zM803 406h1v3h-1zM804 409h1v3h-1zM805 412h1v2h-1zM806 414h1v3h-1zM807 417h1v3h-1zM808 420h1v3h-1zM809 423h1v2h-1zM810 425h1v3h-1zM811 428h1v3h-1zM812 431h1v3h-1zM813 434h1v3h-1zM814 437h1v2h-1zM815 439h1v3h-1zM816 442h1v3h-1zM817 445h1v2h-1zM818 447h1v2h-1zM819 449h1v2h-1zM820 451h1v2h-1zM821 453h1v2h-1zM822 455h1v2h-1zM823 457h1v2h-1zM824 459h1v2h-1zM825 461h1v3h-1zM826 464h1v2h-1zM827 466h1v2h-1zM828 468h1v2h-1zM829 470h1v2h-1zM830 472h1v2h-1zM831 474h1v2h-1zM832 476h1v2h-1zM833 478h1v2h-1zM834 480h1v2h-1zM835 482h2v1h-2zM837 483h1v1h-1zM838 484h2v1h-2zM840 485h1v1h-1zM841 486h2v1h-2zM843 487h1v1h-1zM844 488h1v1h-1zM845 489h2v1h-2zM847 490h1v1h-1zM848 491h2v1h-2zM850 492h1v1h-1zM851 493h2v1h-2zM853 494h1v1h-1zM854 493h1v1h-1zM855 492h2v1h-2zM857 491h1v1h-1zM858 490h1v1h-1zM859 489h1v1h-1zM860 488h1v1h-1zM861 487h2v1h-2zM863 486h1v1h-1zM864 485h1v1h-1zM865 484h1v1h-1zM866 483h1v1h-1zM867 482h2v1h-2zM869 481h1v1h-1zM870 480h1v1h-1zM871 478h1v2h-1zM872 476h1v2h-1zM873 474h1v2h-1zM874 472h1v2h-1zM875 470h1v2h-1zM876 467h1v3h-1zM877 465h1v2h-1zM878 463h1v2h-1zM879 461h1v2h-1zM880 458h1v3h-1zM881 456h1v2h-1zM882 454h1v2h-1zM883 452h1v2h-1zM884 450h1v2h-1zM885 447h1v3h-1zM886 445h1v2h-1zM887 443h1v2h-1zM888 441h1v2h-1zM889 438h1v3h-1zM890 435h1v3h-1zM891 433h1v2h-1zM892 430h1v3h-1zM893 427h1v3h-1zM894 425h1v2h-1zM895 422h1v3h-1zM896 419h1v3h-1zM897 416h1v3h-1zM898 414h1v2h-1zM899 411h1v3h-1zM900 408h1v3h-1zM901 405h1v3h-1zM902 403h1v2h-1zM903 400h1v3h-1zM904 397h1v3h-1zM905 395h1v2h-1zM906 392h1v3h-1zM907 389h1v3h-1zM908 387h1v2h-1zM909 385h1v2h-1zM910 383h1v2h-1zM911 381h1v2h-1zM912 379h1v2h-1zM913 377h1v2h-1zM914 375h1v2h-1zM915 373h1v2h-1zM916 370h1v3h-1zM917 368h1v2h-1zM918 366h1v2h-1zM919 364h1v2h-1zM920 362h1v2h-1zM921 360h1v2h-1zM922 358h1v2h-1zM923 356h1v2h-1zM924 354h1v2h-1zM925 352h1v2h-1zM926 351h1v1h-1zM927 350h2v1h-2zM929 349h1v1h-1zM930 348h1v1h-1zM931 347h2v1h-2zM933 346h1v1h-1zM934 345h1v1h-1zM935 344h1v1h-1zM936 343h2v1h-2zM938 342h1v1h-1zM939 341h1v1h-1zM940 340h2v1h-2zM942 339h1v1h-1zM943 338h1v1h-1zM944 339h1v1h-1zM945 340h2v1h-2zM947 341h1v1h-1zM948 342h1v1h-1zM949 343h1v1h-1zM950 344h2v1h-2zM952 345h1v1h-1zM953 346h1v1h-1zM954 347h2v1h-2zM956 348h1v1h-1zM957 349h1v1h-1zM958 350h1v1h-1zM959 351h2v1h-2zM961 352h1v1h-1zM962 353h1v2h-1zM963 355h1v2h-1zM964 357h1v2h-1zM965 359h1v2h-1zM966 361h1v2h-1zM967 363h1v3h-1zM968 366h1v2h-1zM969 368h1v2h-1zM970 370h1v2h-1zM971 372h1v3h-1zM972 375h1v2h-1zM973 377h1v2h-1zM974 379h1v2h-1zM975 381h1v2h-1zM976 383h1v3h-1zM977 386h1v2h-1zM978 388h1v2h-1zM979 390h1v2h-1zM980 392h1v3h-1zM981 395h1v3h-1zM982 398h1v2h-1zM983 400h1v3h-1zM984 403h1v3h-1zM985 406h1v3h-1zM986 409h1v3h-1zM987 412h1v2h-1zM988 414h1v3h-1zM989 417h1v3h-1zM990 420h1v3h-1zM991 423h1v2h-1zM992 425h1v3h-1zM993 428h1v3h-1zM994 431h1v3h-1zM995 434h1v3h-1zM996 437h1v2h-1zM997 439h1v3h-1zM998 442h1v3h-1zM999 445h1v2h-1zM1000 447h1v2h-1zM1001 449h1v2h-1zM1002 451h1v2h-1zM1003 453h1v2h-1zM1004 455h1v2h-1zM1005 457h1v2h-1zM1006 459h1v2h-1zM1007 461h1v3h-1zM1008 464h1v2h-1zM1009 466h1v2h-1zM1010 468h1v2h-1zM1011 470h1v2h-1zM1012 472h1v2h-1zM1013 474h1v2h-1zM1014 476h1v2h-1zM1015 478h1v2h-1zM1016 480h1v2h-1zM1017 482h2v1h-2zM1019 483h1v1h-1zM1020 484h2v1h-2zM1022 485h1v1h-1zM1023 486h2v1h-2zM1025 487h1v1h-1zM1026 488h1v1h-1zM1027 489h2v1h-2zM1029 490h1v1h-1zM1030 491h2v1h-2zM1032 492h1v1h-1zM1033 493h2v1h-2zM1035 494h1v1h-1zM1036 493h1v1h-1zM1037 492h2v1h-2zM1039 491h1v1h-1zM1040 490h1v1h-1zM1041 489h1v1h-1zM1042 488h1v1h-1zM1043 487h2v1h-2zM1045 486h1v1h-1zM1046 485h1v1h-1zM1047 484h1v1h-1zM1048 483h1v1h-1zM1049 482h2v1h-2zM1051 481h1v1h-1zM1052 480h1v1h-1zM1053 478h1v2h-1zM1054 476h1v2h-1zM1055 474h1v2h-1zM1056 472h1v2h-1zM1057 470h1v2h-1zM1058 467h1v3h-1zM1059 465h1v2h-1zM1060 463h1v2h-1zM1061 461h1v2h-1zM1062 458h1v3h-1zM1063 456h1v2h-1zM1064 454h1v2h-1zM1065 452h1v2h-1zM1066 450h1v2h-1zM1067 447h1v3h-1zM1068 445h1v2h-1zM1069 443h1v2h-1zM1070 441h1v2h-1zM1071 438h1v3h-1zM1072 435h1v3h-1zM1073 433h1v2h-1zM1074 430h1v3h-1zM1075 427h1v3h-1zM1076 425h1v2h-1zM1077 422h1v3h-1zM1078 419h1v3h-1zM1079 416h1v3h-1zM1080 414h1v2h-1zM1081 411h1v3h-1zM1082 408h1v3h-1zM1083 405h1v3h-1zM1084 403h1v2h-1zM1085 400h1v3h-1zM1086 397h1v3h-1zM1087 395h1v2h-1zM1088 392h1v3h-1zM1089 389h1v3h-1zM1090 387h1v2h-1zM1091 385h1v2h-1zM1092 383h1v2h-1zM1093 381h1v2h-1zM1094 379h1v2h-1zM1095 377h1v2h-1zM1096 375h1v2h-1zM1097 373h1v2h-1zM1098 370h1v3h-1zM1099 368h1v2h-1zM1100 366h1v2h-1zM1101 364h1v2h-1zM1102 362h1v2h-1zM1103 360h1v2h-1zM1104 358h1v2h-1zM1105 356h1v2h-1zM1106 354h1v2h-1zM1107 352h1v2h-1zM1108 351h2v1h-2zM1110 350h1v1h-1zM1111 349h1v1h-1zM1112 348h2v1h-2zM1114 347h1v1h-1zM1115 346h1v1h-1zM1116 345h2v1h-2zM1118 344h1v1h-1zM1119 343h1v1h-1zM1120 342h2v1h-2zM1122 341h1v1h-1zM1123 340h1v1h-1zM1124 339h2v1h-2zM1126 338h1v1h-1zM1127 339h1v1h-1zM1128 340h1v1h-1zM1129 341h2v1h-2zM1131 342h1v1h-1zM1132 343h1v1h-1zM1133 344h1v1h-1zM1134 345h1v1h-1zM1135 346h2v1h-2zM1137 347h1v1h-1zM1138 348h1v1h-1zM1139 349h1v1h-1zM1140 350h1v1h-1zM1141 351h2v1h-2zM1143 352h1v1h-1zM1144 353h1v2h-1zM1145 355h1v2h-1zM1146 357h1v2h-1zM1147 359h1v2h-1zM1148 361h1v2h-1zM1149 363h1v3h-1zM1150 366h1v2h-1zM1151 368h1v2h-1zM1152 370h1v2h-1zM1153 372h1v3h-1zM1154 375h1v2h-1zM1155 377h1v2h-1zM1156 379h1v2h-1zM1157 381h1v2h-1zM1158 383h1v3h-1zM1159 386h1v2h-1zM1160 388h1v2h-1zM1161 390h1v2h-1z" fill="#00ff00"/>
<path d="M70 466h2v1h-2zM72 465h2v1h-2zM74 464h2v1h-2zM76 463h2v1h-2zM78 462h3v1h-3zM81 461h2v1h-2zM83 460h2v1h-2zM85 459h2v1h-2zM87 458h3v1h-3zM90 457h2v1h-2zM92 456h2v1h-2zM94 455h2v1h-2zM96 454h3v1h-3zM99 453h2v1h-2zM101 452h2v1h-2zM103 451h2v1h-2zM105 450h3v1h-3zM108 449h2v1h-2zM110 448h2v1h-2zM112 447h2v1h-2zM114 446h2v1h-2zM116 445h2v1h-2zM118 444h2v1h-2zM120 443h2v1h-2zM122 442h2v1h-2zM124 441h2v1h-2zM126 440h2v1h-2zM128 439h2v1h-2zM130 438h2v1h-2zM132 437h2v1h-2zM134 436h1v1h-1zM135 435h2v1h-2zM137 434h2v1h-2zM139 433h2v1h-2zM141 432h2v1h-2zM143 431h2v1h-2zM145 430h2v1h-2zM147 429h2v1h-2zM149 428h2v1h-2zM151 427h2v1h-2zM153 426h2v1h-2zM155 425h2v1h-2zM157 424h2v1h-2zM159 423h2v1h-2zM161 422h1v1h-1zM162 421h2v1h-2zM164 420h2v1h-2zM166 419h1v1h-1zM167 418h2v1h-2zM169 417h2v1h-2zM171 416h1v1h-1zM172 415h2v1h-2zM174 414h1v1h-1zM175 413h2v1h-2zM177 412h2v1h-2zM179 411h1v1h-1zM180 410h2v1h-2zM182 409h2v1h-2zM184 408h2v1h-2zM186 407h2v1h-2zM188 406h1v1h-1zM189 405h2v1h-2zM191 404h2v1h-2zM193 403h2v1h-2zM195 402h2v1h-2zM197 401h2v1h-2zM199 400h2v1h-2zM201 399h2v1h-2zM203 398h2v1h-2zM205 397h2v1h-2zM207 396h2v1h-2zM209 395h2v1h-2zM211 394h2v1h-2zM213 393h2v1h-2zM215 392h2v1h-2zM217 391h2v1h-2zM219 390h2v1h-2zM221 389h2v1h-2zM223 388h2v1h-2zM225 387h1v1h-1zM226 386h2v1h-2zM228 385h2v1h-2zM230 384h2v1h-2zM232 383h2v1h-2zM234 382h2v1h-2zM236 381h2v1h-2zM238 380h2v1h-2zM240 379h2v1h-2zM242 378h3v1h-3zM245 377h2v1h-2zM247 376h2v1h-2zM249 375h2v1h-2zM251 374h3v1h-3zM254 373h2v1h-2zM256 372h2v1h-2zM258 371h2v1h-2zM260 370h3v1h-3zM263 369h2v1h-2zM265 368h2v1h-2zM267 367h2v1h-2zM269 366h3v1h-3zM272 365h2v1h-2zM274 364h2v1h-2zM276 363h2v1h-2zM278 362h3v1h-3zM281 361h2v1h-2zM283 360h2v1h-2zM285 359h2v1h-2zM287 358h3v1h-3zM290 357h3v1h-3zM293 356h3v1h-3zM296 355h4v1h-4zM300 354h3v1h-3zM303 353h3v1h-3zM306 352h3v1h-3zM309 351h4v1h-4zM313 350h4v1h-4zM317 349h3v1h-3zM320 348h4v1h-4zM324 347h3v1h-3zM327 346h4v1h-4zM331 345h4v1h-4zM335 344h3v1h-3zM338 343h4v1h-4zM342 342h5v1h-5zM347 341h6v1h-6zM353 340h6v1h-6zM359 339h12v1h-12zM371 338h13v1h-13zM384 337h10v1h-10zM394 336h9v1h-9zM403 337h9v1h-9zM412 338h13v1h-13zM425 339h12v1h-12zM437 340h6v1h-6zM443 341h6v1h-6zM449 342h5v1h-5zM454 343h4v1h-4zM458 344h3v1h-3zM461 345h4v1h-4zM465 346h4v1h-4zM469 347h3v1h-3zM472 348h4v1h-4zM476 349h4v1h-4zM480 350h4v1h-4zM484 351h4v1h-4zM488 352h3v1h-3zM491 353h3v1h-3zM494 354h3v1h-3zM497 355h3v1h-3zM500 356h3v1h-3zM503 357h3v1h-3zM506 358h3v1h-3zM509 359h2v1h-2zM511 360h2v1h-2zM513 361h2v1h-2zM515 362h3v1h-3zM518 363h2v1h-2zM520 364h2v1h-2zM522 365h2v1h-2zM524 366h3v1h-3zM527 367h2v1h-2zM529 368h2v1h-2zM531 369h2v1h-2zM533 370h3v1h-3zM536 371h2v1h-2zM538 372h2v1h-2zM540 373h2v1h-2zM542 374h3v1h-3zM545 375h2v1h-2zM547 376h2v1h-2zM549 377h2v1h-2zM551 378h3v1h-3zM554 379h2v1h-2zM556 380h2v1h-2zM558 381h2v1h-2zM560 382h2v1h-2zM562 383h2v1h-2zM564 384h2v1h-2zM566 385h2v1h-2zM568 386h2v1h-2zM570 387h2v1h-2zM572 388h2v1h-2zM574 389h2v1h-2zM576 390h2v1h-2zM578 391h2v1h-2zM580 392h1v1h-1zM581 393h2v1h-2zM583 394h2v1h-2zM585 395h2v1h-2zM587 396h2v1h-2zM589 397h2v1h-2zM591 398h2v1h-2zM593 399h2v1h-2zM595 400h2v1h-2zM597 401h2v1h-2zM599 402h2v1h-2zM601 403h2v1h-2zM603 404h2v1h-2zM605 405h2v1h-2zM607 406h1v1h-1zM608 407h2v1h-2zM610 408h2v1h-2zM612 409h2v1h-2zM614 410h2v1h-2zM616 411h1v1h-1zM617 412h2v1h-2zM619 413h2v1h-2zM621 414h1v1h-1zM622 415h2v1h-2zM624 416h1v1h-1zM625 417h2v1h-2zM627 418h2v1h-2zM629 419h1v1h-1zM630 420h2v1h-2zM632 421h2v1h-2zM634 422h1v1h-1zM635 423h2v1h-2zM637 424h2v1h-2zM639 425h2v1h-2zM641 426h2v1h-2zM643 427h2v1h-2zM645 428h2v1h-2zM647 429h2v1h-2zM649 430h2v1h-2zM651 431h2v1h-2zM653 432h2v1h-2zM655 433h2v1h-2zM657 434h2v1h-2zM659 435h2v1h-2zM661 436h2v1h-2zM663 437h2v1h-2zM665 438h2v1h-2zM667 439h2v1h-2zM669 440h2v1h-2zM671 441h1v1h-1zM672 442h2v1h-2zM674 443h2v1h-2zM676 444h2v1h-2zM678 445h2v1h-2zM680 446h2v1h-2zM682 447h2v1h-2zM684 448h2v1h-2zM686 449h2v1h-2zM688 450h3v1h-3zM691 451h2v1h-2zM693 452h2v1h-2zM695 453h2v1h-2zM697 454h3v1h-3zM700 455h2v1h-2zM702 456h2v1h-2zM704 457h2v1h-2zM706 458h3v1h-3zM709 459h2v1h-2zM711 460h2v1h-2zM713 461h2v1h-2zM715 462h3v1h-3zM718 463h2v1h-2zM720 464h2v1h-2zM722 465h2v1h-2zM724 466h3v1h-3zM727 467h2v1h-2zM729 468h2v1h-2zM731 469h2v1h-2zM733 470h3v1h-3zM736 471h2v1h-2zM738 472h2v1h-2zM740 473h2v1h-2zM742 474h3v1h-3zM745 475h3v1h-3zM748 476h2v1h-2zM750 477h3v1h-3zM753 478h3v1h-3zM756 479h2v1h-2zM758 480h3v1h-3zM761 481h4v1h-4zM765 482h4v1h-4zM769 483h5v1h-5zM774 484h4v1h-4zM778 485h4v1h-4zM782 486h4v1h-4zM786 487h3v1h-3zM789 488h4v1h-4zM793 489h4v1h-4zM797 490h4v1h-4zM801 491h6v1h-6zM807 492h6v1h-6zM813 493h12v1h-12zM825 494h56v1h-56zM881 493h12v1h-12zM893 492h6v1h-6zM899 491h6v1h-6zM905 490h4v1h-4zM909 489h4v1h-4zM913 488h4v1h-4zM917 487h3v1h-3zM920 486h4v1h-4zM924 485h4v1h-4zM928 484h4v1h-4zM932 483h5v1h-5zM937 482h4v1h-4zM941 481h4v1h-4zM945 480h3v1h-3zM948 479h2v1h-2zM950 478h3v1h-3zM953 477h3v1h-3zM956 476h2v1h-2zM958 475h3v1h-3zM961 474h3v1h-3zM964 473h2v1h-2zM966 472h2v1h-2zM968 471h2v1h-2zM970 470h3v1h-3zM973 469h2v1h-2zM975 468h2v1h-2zM977 467h2v1h-2zM979 466h3v1h-3zM982 465h2v1h-2zM984 464h2v1h-2zM986 463h2v1h-2zM988 462h3v1h-3zM991 461h2v1h-2zM993 460h2v1h-2zM995 459h2v1h-2zM997 458h3v1h-3zM1000 457h2v1h-2zM1002 456h2v1h-2zM1004 455h2v1h-2zM1006 454h3v1h-3zM1009 453h2v1h-2zM1011 452h2v1h-2zM1013 451h2v1h-2zM1015 450h3v1h-3zM1018 449h2v1h-2zM1020 448h2v1h-2zM1022 447h2v1h-2zM1024 446h2v1h-2zM1026 445h2v1h-2zM1028 444h2v1h-2zM1030 443h2v1h-2zM1032 442h2v1h-2zM1034 441h2v1h-2zM1036 440h2v1h-2zM1038 439h2v1h-2zM1040 438h2v1h-2zM1042 437h2v1h-2zM1044 436h1v1h-1zM1045 435h2v1h-2zM1047 434h2v1h-2zM1049 433h2v1h-2zM1051 432h2v1h-2zM1053 431h2v1h-2zM1055 430h2v1h-2zM1057 429h2v1h-2zM1059 428h2v1h-2zM1061 427h2v1h-2zM1063 426h2v1h-2zM1065 425h2v1h-2zM1067 424h2v1h-2zM1069 423h2v1h-2zM1071 422h1v1h-1zM1072 421h2v1h-2zM1074 420h2v1h-2zM1076 419h1v1h-1zM1077 418h2v1h-2zM1079 417h2v1h-2zM1081 416h1v1h-1zM1082 415h2v1h-2zM1084 414h1v1h-1zM1085 413h2v1h-2zM1087 412h2v1h-2zM1089 411h1v1h-1zM1090 410h2v1h-2zM1092 409h2v1h-2zM1094 408h2v1h-2zM1096 407h2v1h-2zM1098 406h1v1h-1zM1099 405h2v1h-2zM1101 404h2v1h-2zM1103 403h2v1h-2zM1105 402h2v1h-2zM1107 401h2v1h-2zM1109 400h2v1h-2zM1111 399h2v1h-2zM1113 398h2v1h-2zM1115 397h2v1h-2zM1117 396h2v1h-2zM1119 395h2v1h-2zM1121 394h2v1h-2zM1123 393h2v1h-2zM1125 392h2v1h-2zM1127 391h2v1h-2zM1129 390h2v1h-2zM1131 389h2v1h-2zM1133 388h2v1h-2zM1135 387h1v1h-1zM1136 386h2v1h-2zM1138 385h2v1h-2zM1140 384h2v1h-2zM1142 383h2v1h-2zM1144 382h2v1h-2zM1146 381h2v1h-2zM1148 380h2v1h-2zM1150 379h2v1h-2zM1152 378h3v1h-3zM1155 377h2v1h-2zM1157 376h2v1h-2zM1159 375h2v1h-2zM1161 374h1v1h-1z" fill="#ffffff"/>
<path d="M70 341h5v1h-5zM75 340h9v1h-9zM84 339h32v1h-32zM116 338h109v1h-109zM225 339h32v1h-32zM257 340h9v1h-9zM266 341h7v1h-7zM273 342h6v1h-6zM279 343h6v1h-6zM285 344h8v1h-8zM293 345h10v1h-10zM303 346h13v1h-13zM316 347h12v1h-12zM328 348h6v1h-6zM334 349h6v1h-6zM340 350h6v1h-6zM346 351h6v1h-6zM352 352h6v1h-6zM358 353h6v1h-6zM364 354h4v1h-4zM368 355h5v1h-5zM373 356h4v1h-4zM377 357h6v1h-6zM383 358h6v1h-6zM389 359h6v1h-6zM395 360h6v1h-6zM401 361h6v1h-6zM407 362h6v1h-6zM413 363h5v1h-5zM418 364h4v1h-4zM422 365h3v1h-3zM425 366h4v1h-4zM429 367h4v1h-4zM433 368h4v1h-4zM437 369h6v1h-6zM443 370h6v1h-6zM449 371h5v1h-5zM454 372h4v1h-4zM458 373h3v1h-3zM461 374h4v1h-4zM465 375h4v1h-4zM469 376h3v1h-3zM472 377h4v1h-4zM476 378h4v1h-4zM480 379h4v1h-4zM484 380h4v1h-4zM488 381h4v1h-4zM492 382h4v1h-4zM496 383h5v1h-5zM501 384h4v1h-4zM505 385h4v1h-4zM509 386h4v1h-4zM513 387h3v1h-3zM516 388h4v1h-4zM520 389h4v1h-4zM524 390h3v1h-3zM527 391h4v1h-4zM531 392h3v1h-3zM534 393h4v1h-4zM538 394h4v1h-4zM542 395h3v1h-3zM545 396h4v1h-4zM549 397h3v1h-3zM552 398h4v1h-4zM556 399h4v1h-4zM560 400h4v1h-4zM564 401h5v1h-5zM569 402h4v1h-4zM573 403h5v1h-5zM578 404h4v1h-4zM582 405h4v1h-4zM586 406h3v1h-3zM589 407h4v1h-4zM593 408h4v1h-4zM597 409h3v1h-3zM600 410h4v1h-4zM604 411h3v1h-3zM607 412h4v1h-4zM611 413h4v1h-4zM615 414h3v1h-3zM618 415h4v1h-4zM622 416h3v1h-3zM625 417h4v1h-4zM629 418h4v1h-4zM633 419h4v1h-4zM637 420h4v1h-4zM641 421h5v1h-5zM646 422h4v1h-4zM650 423h4v1h-4zM654 424h4v1h-4zM658 425h4v1h-4zM662 426h4v1h-4zM666 427h4v1h-4zM670 428h3v1h-3zM673 429h4v1h-4zM677 430h3v1h-3zM680 431h4v1h-4zM684 432h4v1h-4zM688 433h3v1h-3zM691 434h4v1h-4zM695 435h3v1h-3zM698 436h4v1h-4zM702 437h4v1h-4zM706 438h3v1h-3zM709 439h4v1h-4zM713 440h3v1h-3zM716 441h4v1h-4zM720 442h4v1h-4zM724 443h4v1h-4zM728 444h4v1h-4zM732 445h5v1h-5zM737 446h4v1h-4zM741 447h4v1h-4zM745 448h4v1h-4zM749 449h4v1h-4zM753 450h4v1h-4zM757 451h4v1h-4zM761 452h3v1h-3zM764 453h4v1h-4zM768 454h3v1h-3zM771 455h4v1h-4zM775 456h4v1h-4zM779 457h3v1h-3zM782 458h4v1h-4zM786 459h3v1h-3zM789 460h4v1h-4zM793 461h4v1h-4zM797 462h4v1h-4zM801 463h6v1h-6zM807 464h6v1h-6zM813 465h5v1h-5zM818 466h4v1h-4zM822 467h3v1h-3zM825 468h4v1h-4zM829 469h4v1h-4zM833 470h5v1h-5zM838 471h6v1h-6zM844 472h6v1h-6zM850 473h6v1h-6zM856 474h6v1h-6zM862 475h6v1h-6zM868 476h6v1h-6zM874 477h6v1h-6zM880 478h6v1h-6zM886 479h6v1h-6zM892 480h6v1h-6zM898 481h6v1h-6zM904 482h6v1h-6zM910 483h6v1h-6zM916 484h6v1h-6zM922 485h8v1h-8zM930 486h9v1h-9zM939 487h9v1h-9zM948 488h10v1h-10zM958 489h7v1h-7zM965 490h6v1h-6zM971 491h6v1h-6zM977 492h12v1h-12zM989 493h37v1h-37zM1026 494h110v1h-110zM1136 493h26v1h-26z" fill="#ffff00"/>
<path d="M70 387h27v1h-27zM97 388h14v1h-14zM111 389h10v1h-10zM121 390h27v1h-27zM148 391h9v1h-9zM157 392h31v1h-31zM188 393h14v1h-14zM202 394h10v1h-10zM212 395h31v1h-31zM243 396h32v1h-32zM275 397h9v1h-9zM284 398h9v1h-9zM293 399h10v1h-10zM303 400h31v1h-31zM334 401h32v1h-32zM366 402h9v1h-9zM375 403h14v1h-14zM389 404h32v1h-32zM421 405h9v1h-9zM430 406h9v1h-9zM439 407h9v1h-9zM448 408h32v1h-32zM480 409h32v1h-32zM512 410h9v1h-9zM521 411h13v1h-13zM534 412h32v1h-32zM566 413h10v1h-10zM576 414h9v1h-9zM585 415h9v1h-9zM594 416h31v1h-31zM625 417h32v1h-32zM657 418h10v1h-10zM667 419h13v1h-13zM680 420h32v1h-32zM712 421h9v1h-9zM721 422h13v1h-13zM734 423h33v1h-33zM767 424h9v1h-9zM776 425h27v1h-27zM803 426h9v1h-9zM812 427h13v1h-13zM825 428h33v1h-33zM858 429h9v1h-9zM867 430h13v1h-13zM880 431h32v1h-32zM912 432h9v1h-9zM921 433h27v1h-27zM948 434h10v1h-10zM958 435h13v1h-13zM971 436h32v1h-32zM1003 437h9v1h-9zM1012 438h32v1h-32zM1044 439h14v1h-14zM1058 440h9v1h-9zM1067 441h27v1h-27zM1094 442h9v1h-9zM1103 443h32v1h-32zM1135 444h14v1h-14zM1149 445h9v1h-9zM1158 446h4v1h-4z" fill="#00ffff"/>
<rect x="70" y="368" width="36" height="16" fill="rgba(255,255,255,0.502)"/>
<rect x="106" y="368" width="55" height="16" fill="rgba(0,255,0,0.502)"/>
<rect x="161" y="368" width="55" height="16" fill="rgba(255,255,255,0.502)"/>
<rect x="216" y="368" width="54" height="16" fill="rgba(0,255,0,0.502)"/>
<rect x="270" y="368" width="55" height="16" fill="rgba(255,255,255,0.502)"/>
<rect x="325" y="368" width="54" height="16" fill="rgba(0,255,0,0.502)"/>
<rect x="379" y="368" width="55" height="16" fill="rgba(255,255,255,0.502)"/>
<rect x="434" y="368" width="55" height="16" fill="rgba(0,255,0,0.502)"/>
<rect x="489" y="368" width="54" height="16" fill="rgba(255,255,255,0.502)"/>
<rect x="543" y="368" width="55" height="16" fill="rgba(0,255,0,0.502)"/>
<rect x="598" y="368" width="54" height="16" fill="rgba(255,255,255,0.502)"/>
<rect x="652" y="368" width="55" height="16" fill="rgba(0,255,0,0.502)"/>
<rect x="707" y="368" width="55" height="16" fill="rgba(255,255,255,0.502)"/>
<rect x="762" y="368" width="54" height="16" fill="rgba(0,255,0,0.502)"/>
<rect x="816" y="368" width="55" height="16" fill="rgba(255,255,255,0.502)"/>
<rect x="871" y="368" width="54" height="16" fill="rgba(0,255,0,0.502)"/>
<rect x="925" y="368" width="55" height="16" fill="rgba(255,255,255,0.502)"/>
<rect x="980" y="368" width="55" height="16" fill="rgba(0,255,0,0.502)"/>
<rect x="1035" y="368" width="54" height="16" fill="rgba(255,255,255,0.502)"/>
<rect x="1089" y="368" width="55" height="16" fill="rgba(0,255,0,0.502)"/>
<rect x="1144" y="368" width="18" height="16" fill="rgba(255,255,255,0.502)"/>
<path d="M70 462h18v1h-18zM88 478h91v1h-91zM179 462h91v1h-91zM270 478h91v1h-91zM361 462h91v1h-91zM452 478h91v1h-91zM543 462h91v1h-91zM634 478h91v1h-91zM725 462h91v1h-91zM816 478h91v1h-91zM907 462h91v1h-91zM998 478h91v1h-91zM1089 462h73v1h-73z" fill="#f59646"/>
<path d="M70 439h3v55h-3zM88 439h3v55h-3zM106 439h3v55h-3zM125 439h3v55h-3zM143 439h3v55h-3zM161 439h3v55h-3zM179 439h3v55h-3zM197 439h3v55h-3zM216 439h3v55h-3zM234 439h3v55h-3zM252 439h3v55h-3zM270 439h3v55h-3zM288 439h3v55h-3zM307 439h3v55h-3zM325 439h3v55h-3zM343 439h3v55h-3zM361 439h3v55h-3zM379 439h3v55h-3zM398 439h3v55h-3zM416 439h3v55h-3zM434 439h3v55h-3zM452 439h3v55h-3zM470 439h3v55h-3zM489 439h3v55h-3zM507 439h3v55h-3zM525 439h3v55h-3zM543 439h3v55h-3zM561 439h3v55h-3zM580 439h3v55h-3zM598 439h3v55h-3zM616 439h3v55h-3zM634 439h3v55h-3zM652 439h3v55h-3zM671 439h3v55h-3zM689 439h3v55h-3zM707 439h3v55h-3zM725 439h3v55h-3zM743 439h3v55h-3zM762 439h3v55h-3zM780 439h3v55h-3zM798 439h3v55h-3zM816 439h3v55h-3zM834 439h3v55h-3zM853 439h3v55h-3zM871 439h3v55h-3zM889 439h3v55h-3zM907 439h3v55h-3zM925 439h3v55h-3zM944 439h3v55h-3zM962 439h3v55h-3zM980 439h3v55h-3zM998 439h3v55h-3zM1016 439h3v55h-3zM1035 439h3v55h-3zM1053 439h3v55h-3zM1071 439h3v55h-3zM1089 439h3v55h-3zM1107 439h3v55h-3zM1126 439h3v55h-3zM1144 439h3v55h-3z" fill="#ff00ff"/>
<rect x="69.5" y="335.5" width="1094" height="160" fill="none" stroke="#808080" shape-rendering="crispEdges"/>
<path d="M1170 336h12v1h-11v157h12v1h-13z" fill="#00ff00"/>
<rect x="124" y="336" width="1" height="159" fill="#ff0000"/>
<polygon points="118.5,336 130.5,336 124.5,347.5" fill="#ff0000" shape-rendering="crispEdges"/>
<polygon points="118.5,495 130.5,495 124.5,483.5" fill="#ff0000" shape-rendering="crispEdges"/>
<text font-family="Liberation Sans, sans-serif" font-size="12.5" fill="#00ff00" y="312" x="91.39 98.34 105.30 112.25 120.01 124.30 131.25 139.02 143.30 150.26">2020/02/25</text>
<text font-family="Liberation Sans, sans-serif" font-size="12.5" fill="#00ff00" y="327" x="98.54 105.50 113.16 117.35 124.30 131.97 136.15 143.10">11:26:50</text>
<rect x="1107" y="336" width="1" height="159" fill="#ff0000"/>
<polygon points="1101.5,336 1113.5,336 1107.5,347.5" fill="#ff0000" shape-rendering="crispEdges"/>
<polygon points="1101.5,495 1113.5,495 1107.5,483.5" fill="#ff0000" shape-rendering="crispEdges"/>
<text font-family="Liberation Sans, sans-serif" font-size="12.5" fill="#00ff00" y="312" x="1074.39 1081.34 1088.30 1095.25 1103.01 1107.30 1114.25 1122.02 1126.30 1133.26">2020/02/25</text>
<text font-family="Liberation Sans, sans-serif" font-size="12.5" fill="#00ff00" y="327" x="1081.54 1088.50 1096.16 1100.35 1107.30 1114.97 1119.15 1126.10">11:27:44</text>
<text font-family="Liberation Sans, sans-serif" font-size="12.5" fill="#00ff00" y="513.3" x="37.39 44.34 51.30 58.25 66.01 70.30 77.25 85.02 89.30 96.26">2020/02/25</text>
<text font-family="Liberation Sans, sans-serif" font-size="12.5" fill="#00ff00" y="528.3" x="44.54 51.50 59.16 63.35 70.30 77.97 82.15 89.10">11:26:48</text>
<text font-family="Liberation Sans, sans-serif" font-size="12.5" fill="#00ff00" y="513.3" x="146.59 153.54 160.50 167.45 175.21 179.50 186.45 194.22 198.50 205.46">2020/02/25</text>
<text font-family="Liberation Sans, sans-serif" font-size="12.5" fill="#00ff00" y="528.3" x="153.74 160.70 168.36 172.55 179.50 187.17 191.35 198.30">11:26:54</text>
<text font-family="Liberation Sans, sans-serif" font-size="12.5" fill="#00ff00" y="513.3" x="255.79 262.74 269.70 276.65 284.41 288.70 295.65 303.42 307.70 314.66">2020/02/25</text>
<text font-family="Liberation Sans, sans-serif" font-size="12.5" fill="#00ff00" y="528.3" x="262.94 269.90 277.56 281.75 288.70 296.37 300.55 307.50">11:27:00</text>
<text font-family="Liberation Sans, sans-serif" font-size="12.5" fill="#00ff00" y="513.3" x="364.99 371.94 378.90 385.85 393.61 397.90 404.85 412.62 416.90 423.86">2020/02/25</text>
<text font-family="Liberation Sans, sans-serif" font-size="12.5" fill="#00ff00" y="528.3" x="372.14 379.10 386.76 390.95 397.90 405.57 409.75 416.70">11:27:06</text>
<text font-family="Liberation Sans, sans-serif" font-size="12.5" fill="#00ff00" y="513.3" x="474.19 481.14 488.10 495.05 502.81 507.10 514.05 521.82 526.10 533.06">2020/02/25</text>
<text font-family="Liberation Sans, sans-serif" font-size="12.5" fill="#00ff00" y="528.3" x="481.34 488.30 495.96 500.15 507.10 514.77 518.95 525.90">11:27:12</text>
<text font-family="Liberation Sans, sans-serif" font-size="12.5" fill="#00ff00" y="513.3" x="583.39 590.34 597.30 604.25 612.01 616.30 623.25 631.02 635.30 642.26">2020/02/25</text>
<text font-family="Liberation Sans, sans-serif" font-size="12.5" fill="#00ff00" y="528.3" x="590.54 597.50 605.16 609.35 616.30 623.97 628.15 635.10">11:27:18</text>
<text font-family="Liberation Sans, sans-serif" font-size="12.5" fill="#00ff00" y="513.3" x="692.59 699.54 706.50 713.45 721.21 725.50 732.45 740.22 744.50 751.46">2020/02/25</text>
<text font-family="Liberation Sans, sans-serif" font-size="12.5" fill="#00ff00" y="528.3" x="699.74 706.70 714.36 718.55 725.50 733.17 737.35 744.30">11:27:24</text>
<text font-family="Liberation Sans, sans-serif" font-size="12.5" fill="#00ff00" y="513.3" x="801.79 808.74 815.70 822.65 830.41 834.70 841.65 849.42 853.70 860.66">2020/02/25</text>
<text font-family="Liberation Sans, sans-serif" font-size="12.5" fill="#00ff00" y="528.3" x="808.94 815.90 823.56 827.75 834.70 842.37 846.55 853.50">11:27:30</text>
<text font-family="Liberation Sans, sans-serif" font-size="12.5" fill="#00ff00" y="513.3" x="910.99 917.94 924.90 931.85 939.61 943.90 950.85 958.62 962.90 969.86">2020/02/25</text>
<text font-family="Liberation Sans, sans-serif" font-size="12.5" fill="#00ff00" y="528.3" x="918.14 925.10 932.76 936.95 943.90 951.57 955.75 962.70">11:27:36</text>
<text font-family="Liberation Sans, sans-serif" font-size="12.5" fill="#00ff00" y="513.3" x="1020.19 1027.14 1034.10 1041.05 1048.81 1053.10 1060.05 1067.82 1072.10 1079.06">2020/02/25</text>
<text font-family="Liberation Sans, sans-serif" font-size="12.5" fill="#00ff00" y="528.3" x="1027.34 1034.30 1041.96 1046.15 1053.10 1060.77 1064.95 1071.90">11:27:42</text>
<text font-family="Liberation Sans, sans-serif" font-size="12.5" fill="#00ff00" y="513.3" x="1129.39 1136.34 1143.30 1150.25 1158.01 1162.30 1169.25 1177.02 1181.30 1188.26">2020/02/25</text>
<text font-family="Liberation Sans, sans-serif" font-size="12.5" fill="#00ff00" y="528.3" x="1136.54 1143.50 1151.16 1155.35 1162.30 1169.97 1174.15 1181.10">11:27:48</text>
<rect x="5.5" y="545.5" width="27" height="27" fill="#f0f0f0" stroke="#adadad" stroke-width="1"/>
<rect x="37.5" y="545.5" width="27" height="27" fill="#f0f0f0" stroke="#adadad" stroke-width="1"/>
<rect x="69.5" y="545.5" width="27" height="27" fill="#f0f0f0" stroke="#adadad" stroke-width="1"/>
<rect x="101.5" y="545.5" width="27" height="27" fill="#f0f0f0" stroke="#adadad" stroke-width="1"/>
<rect x="133.5" y="545.5" width="27" height="27" fill="#f0f0f0" stroke="#adadad" stroke-width="1"/>
<rect x="165.5" y="545.5" width="27" height="27" fill="#f0f0f0" stroke="#adadad" stroke-width="1"/>
<rect x="197.5" y="545.5" width="27" height="27" fill="#f0f0f0" stroke="#adadad" stroke-width="1"/>
<polygon points="19.2,551.8 19.2,566.2 11.2,559" fill="#000"/>
<polygon points="28.4,551.8 28.4,566.2 20.4,559" fill="#000"/>
<polygon points="54.4,551.8 54.4,566.2 46.3,559" fill="#000"/>
<polygon points="79.8,551.8 79.8,566.2 88.1,559" fill="#000"/>
<polygon points="106.8,551.8 106.8,566.2 114.8,559" fill="#000"/>
<polygon points="116.1,551.8 116.1,566.2 124,559" fill="#000"/>
<polygon points="138.1,551.8 138.1,566.2 146,559" fill="#000"/>
<polygon points="156,551.8 156,566.2 148.2,559" fill="#000"/>
<polygon points="177.3,551.8 177.3,566.2 169.4,559" fill="#000"/>
<polygon points="181.1,551.8 181.1,566.2 189,559" fill="#000"/>
<rect x="200.3" y="550" width="1.8" height="17.6" fill="#000"/>
<rect x="220.2" y="550" width="1.8" height="17.6" fill="#000"/>
<polygon points="209.6,551.8 209.6,566.2 202,559" fill="#000"/>
<polygon points="213.2,551.8 213.2,566.2 220.6,559" fill="#000"/>
<rect x="955.5" y="545.5" width="27" height="27" fill="#f0f0f0" stroke="#adadad" stroke-width="1"/>
<g transform="translate(-4 540)">
<path d="M965.7 16.7A6.9 6.9 0 0 1 979.0 15.2" fill="none" stroke="#000" stroke-width="1.8"/>
<polygon points="981.9,12.4 980.6,17.9 976.3,16.8" fill="#000"/>
<path d="M979.7 21.3A6.9 6.9 0 0 1 966.4 22.8" fill="none" stroke="#000" stroke-width="1.8"/>
<polygon points="963.2,25.7 964.9,19.7 969.0,21.3" fill="#000"/>
</g>
<rect x="987.5" y="545.5" width="135" height="27" fill="#000" stroke="#c4c4c4"/>
<text font-family="Liberation Sans, sans-serif" font-size="12.5" fill="#fff" y="563" x="994.30 1001.25 1008.20 1015.16 1022.92 1027.21 1034.16 1041.92 1046.21 1053.16 1060.38 1064.12 1071.07 1078.73 1082.92 1089.87 1097.54 1101.72 1108.67">2020/02/25 11:26:48</text>
<rect x="1127.5" y="545.5" width="99" height="27" fill="#000" stroke="#c4c4c4"/>
<text font-family="Liberation Sans, sans-serif" font-size="12.5" fill="#fff" y="563" x="1161.15">1</text>
<text font-family="'Liberation Sans', 'Noto Sans CJK JP', sans-serif" font-size="12.5" fill="#fff" y="563.25" x="1168.05 1180.05">分間</text>
<rect x="5" y="577" width="1222" height="170" fill="#a8a8a8"/>
<rect x="6" y="578" width="1202" height="32" fill="#e3e3e3"/>
<rect x="1208" y="578" width="18" height="168" fill="#f0f0f0"/>
<rect x="6" y="611" width="1202" height="135" fill="#000"/>
<rect x="6" y="611" width="1202" height="16" fill="#464646"/>
<rect x="1208" y="730" width="1" height="16" fill="#000"/>
<rect x="34" y="578" width="1" height="32" fill="#a8a8a8"/>
<rect x="64" y="578" width="1" height="32" fill="#a8a8a8"/>
<rect x="539" y="578" width="1" height="32" fill="#a8a8a8"/>
<rect x="584" y="578" width="1" height="32" fill="#a8a8a8"/>
<rect x="896" y="578" width="1" height="32" fill="#a8a8a8"/>
<rect x="1208" y="578" width="1" height="33" fill="#a8a8a8"/>
<rect x="636" y="594" width="1" height="16" fill="#a8a8a8"/>
<rect x="688" y="594" width="1" height="16" fill="#a8a8a8"/>
<rect x="740" y="594" width="1" height="16" fill="#a8a8a8"/>
<rect x="792" y="594" width="1" height="16" fill="#a8a8a8"/>
<rect x="844" y="594" width="1" height="16" fill="#a8a8a8"/>
<rect x="948" y="594" width="1" height="16" fill="#a8a8a8"/>
<rect x="1000" y="594" width="1" height="16" fill="#a8a8a8"/>
<rect x="1052" y="594" width="1" height="16" fill="#a8a8a8"/>
<rect x="1104" y="594" width="1" height="16" fill="#a8a8a8"/>
<rect x="1156" y="594" width="1" height="16" fill="#a8a8a8"/>
<rect x="585" y="593" width="623" height="1" fill="#a8a8a8"/>
<rect x="6" y="610" width="1202" height="1" fill="#a8a8a8"/>
<rect x="34" y="611" width="1" height="118" fill="#a8a8a8"/>
<rect x="64" y="611" width="1" height="118" fill="#a8a8a8"/>
<rect x="539" y="611" width="1" height="118" fill="#a8a8a8"/>
<rect x="584" y="611" width="1" height="118" fill="#a8a8a8"/>
<rect x="636" y="611" width="1" height="118" fill="#a8a8a8"/>
<rect x="688" y="611" width="1" height="118" fill="#a8a8a8"/>
<rect x="740" y="611" width="1" height="118" fill="#a8a8a8"/>
<rect x="792" y="611" width="1" height="118" fill="#a8a8a8"/>
<rect x="844" y="611" width="1" height="118" fill="#a8a8a8"/>
<rect x="896" y="611" width="1" height="118" fill="#a8a8a8"/>
<rect x="948" y="611" width="1" height="118" fill="#a8a8a8"/>
<rect x="1000" y="611" width="1" height="118" fill="#a8a8a8"/>
<rect x="1052" y="611" width="1" height="118" fill="#a8a8a8"/>
<rect x="1104" y="611" width="1" height="118" fill="#a8a8a8"/>
<rect x="1156" y="611" width="1" height="118" fill="#a8a8a8"/>
<rect x="6" y="627" width="1202" height="1" fill="#a8a8a8"/>
<rect x="6" y="644" width="1202" height="1" fill="#a8a8a8"/>
<rect x="6" y="661" width="1202" height="1" fill="#a8a8a8"/>
<rect x="6" y="678" width="1202" height="1" fill="#a8a8a8"/>
<rect x="6" y="695" width="1202" height="1" fill="#a8a8a8"/>
<rect x="6" y="712" width="1202" height="1" fill="#a8a8a8"/>
<rect x="6" y="729" width="1202" height="1" fill="#a8a8a8"/>
<polygon points="1214.6,590.2 1221.2,590.2 1217.8,583.9" fill="#b4b4b4"/>
<polygon points="1214.6,735.0 1221.2,735.0 1217.8,741.2" fill="#b4b4b4"/>
<text font-family="'Liberation Sans', 'Noto Sans CJK JP', sans-serif" font-size="12.5" fill="#000" y="589.95" x="7.80 20.00">表示</text>
<text font-family="'Liberation Sans', 'Noto Sans CJK JP', sans-serif" font-size="12.5" fill="#000" y="589.95" x="43.80">色</text>
<text font-family="'Liberation Sans', 'Noto Sans CJK JP', sans-serif" font-size="12.5" fill="#000" x="282.95" y="590.2" textLength="37" lengthAdjust="spacingAndGlyphs">タイトル</text>
<text font-family="'Liberation Sans', 'Noto Sans CJK JP', sans-serif" font-size="12.5" fill="#000" y="589.95" x="551.00 563.10">単位</text>
<text font-family="'Liberation Sans', 'Noto Sans CJK JP', sans-serif" font-size="12.5" fill="#000" x="698.61" y="590.3" textLength="26" lengthAdjust="spacingAndGlyphs">グラフ</text>
<text font-family="Liberation Sans, sans-serif" font-size="12.5" fill="#000" y="590.3" x="724.20">1</text>
<text font-family="'Liberation Sans', 'Noto Sans CJK JP', sans-serif" font-size="12.5" fill="#000" x="1010.61" y="590.3" textLength="26" lengthAdjust="spacingAndGlyphs">グラフ</text>
<text font-family="Liberation Sans, sans-serif" font-size="12.5" fill="#000" y="590.3" x="1036.20">2</text>
<text font-family="'Liberation Sans', 'Noto Sans CJK JP', sans-serif" font-size="12.5" fill="#000" y="607.05" x="592.80 604.90 617.00">現在値</text>
<text font-family="'Liberation Sans', 'Noto Sans CJK JP', sans-serif" font-size="12.5" fill="#000" x="638.71" y="607.3" textLength="40.6" lengthAdjust="spacingAndGlyphs">カーソル</text>
<text font-family="Liberation Sans, sans-serif" font-size="12.5" fill="#000" y="607.3" x="679.30">1</text>
<text font-family="'Liberation Sans', 'Noto Sans CJK JP', sans-serif" font-size="12.5" fill="#000" x="690.71" y="607.3" textLength="40.6" lengthAdjust="spacingAndGlyphs">カーソル</text>
<text font-family="Liberation Sans, sans-serif" font-size="12.5" fill="#000" y="607.3" x="731.30">2</text>
<text font-family="'Liberation Sans', 'Noto Sans CJK JP', sans-serif" font-size="12.5" fill="#000" y="607.05" x="748.80 760.90 773.00">最小値</text>
<text font-family="'Liberation Sans', 'Noto Sans CJK JP', sans-serif" font-size="12.5" fill="#000" y="607.05" x="800.80 812.90 825.00">最大値</text>
<text font-family="'Liberation Sans', 'Noto Sans CJK JP', sans-serif" font-size="12.5" fill="#000" y="607.05" x="852.80 864.90 877.00">平均値</text>
<text font-family="'Liberation Sans', 'Noto Sans CJK JP', sans-serif" font-size="12.5" fill="#000" y="607.05" x="904.80 916.90 929.00">現在値</text>
<text font-family="'Liberation Sans', 'Noto Sans CJK JP', sans-serif" font-size="12.5" fill="#000" x="950.71" y="607.3" textLength="40.6" lengthAdjust="spacingAndGlyphs">カーソル</text>
<text font-family="Liberation Sans, sans-serif" font-size="12.5" fill="#000" y="607.3" x="991.30">1</text>
<text font-family="'Liberation Sans', 'Noto Sans CJK JP', sans-serif" font-size="12.5" fill="#000" x="1002.71" y="607.3" textLength="40.6" lengthAdjust="spacingAndGlyphs">カーソル</text>
<text font-family="Liberation Sans, sans-serif" font-size="12.5" fill="#000" y="607.3" x="1043.30">2</text>
<text font-family="'Liberation Sans', 'Noto Sans CJK JP', sans-serif" font-size="12.5" fill="#000" y="607.05" x="1060.80 1072.90 1085.00">最小値</text>
<text font-family="'Liberation Sans', 'Noto Sans CJK JP', sans-serif" font-size="12.5" fill="#000" y="607.05" x="1112.80 1124.90 1137.00">最大値</text>
<text font-family="'Liberation Sans', 'Noto Sans CJK JP', sans-serif" font-size="12.5" fill="#000" y="607.05" x="1164.80 1176.90 1189.00">平均値</text>
<rect x="14.5" y="614.5" width="11" height="10" fill="#fff" stroke="#d9d9d9"/>
<polyline points="16.2,619.8 19.4,623.3 22.8,617" fill="none" stroke="#000" stroke-width="0.9"/>
<rect x="44.5" y="616.5" width="11" height="6" fill="#00ff00" stroke="#b4b4b4"/>
<text font-family="'Liberation Sans', 'Noto Sans CJK JP', sans-serif" font-size="12.5" fill="#fff" x="68.05" y="624.4" textLength="37" lengthAdjust="spacingAndGlyphs">タイトル</text>
<text font-family="Liberation Sans, sans-serif" font-size="12.5" fill="#fff" y="624.4" x="105.00 111.95">01</text>
<text font-family="Liberation Sans, sans-serif" font-size="12.5" fill="#fff" y="624.4" x="603.55 610.50">64</text>
<text font-family="Liberation Sans, sans-serif" font-size="12.5" fill="#fff" y="624.4" x="659.02">0</text>
<text font-family="Liberation Sans, sans-serif" font-size="12.5" fill="#fff" y="624.4" x="707.55 714.50">90</text>
<text font-family="Liberation Sans, sans-serif" font-size="12.5" fill="#fff" y="624.4" x="763.02">0</text>
<text font-family="Liberation Sans, sans-serif" font-size="12.5" fill="#fff" y="624.4" x="811.55 818.50">99</text>
<text font-family="Liberation Sans, sans-serif" font-size="12.5" fill="#fff" y="624.4" x="863.55 870.50">48</text>
<text font-family="Liberation Sans, sans-serif" font-size="12.5" fill="#fff" y="624.4" x="915.55 922.50">64</text>
<text font-family="Liberation Sans, sans-serif" font-size="12.5" fill="#fff" y="624.4" x="971.02">0</text>
<text font-family="Liberation Sans, sans-serif" font-size="12.5" fill="#fff" y="624.4" x="1019.55 1026.50">90</text>
<text font-family="Liberation Sans, sans-serif" font-size="12.5" fill="#fff" y="624.4" x="1075.02">0</text>
<text font-family="Liberation Sans, sans-serif" font-size="12.5" fill="#fff" y="624.4" x="1123.55 1130.50">99</text>
<text font-family="Liberation Sans, sans-serif" font-size="12.5" fill="#fff" y="624.4" x="1175.55 1182.50">48</text>
<rect x="14.5" y="631.5" width="11" height="10" fill="#fff" stroke="#d9d9d9"/>
<polyline points="16.2,636.8 19.4,640.3 22.8,634" fill="none" stroke="#000" stroke-width="0.9"/>
<rect x="44.5" y="633.5" width="11" height="6" fill="#ffffff" stroke="#b4b4b4"/>
<text font-family="'Liberation Sans', 'Noto Sans CJK JP', sans-serif" font-size="12.5" fill="#fff" x="68.05" y="641.4" textLength="37" lengthAdjust="spacingAndGlyphs">タイトル</text>
<text font-family="Liberation Sans, sans-serif" font-size="12.5" fill="#fff" y="641.4" x="105.00 111.95">02</text>
<text font-family="Liberation Sans, sans-serif" font-size="12.5" fill="#fff" y="641.4" x="607.02">3</text>
<text font-family="Liberation Sans, sans-serif" font-size="12.5" fill="#fff" y="641.4" x="655.55 662.50">34</text>
<text font-family="Liberation Sans, sans-serif" font-size="12.5" fill="#fff" y="641.4" x="707.55 714.50">13</text>
<text font-family="Liberation Sans, sans-serif" font-size="12.5" fill="#fff" y="641.4" x="763.02">0</text>
<text font-family="Liberation Sans, sans-serif" font-size="12.5" fill="#fff" y="641.4" x="808.07 815.02 821.98">100</text>
<text font-family="Liberation Sans, sans-serif" font-size="12.5" fill="#fff" y="641.4" x="863.55 870.50">48</text>
<text font-family="Liberation Sans, sans-serif" font-size="12.5" fill="#fff" y="641.4" x="915.55 922.50">76</text>
<text font-family="Liberation Sans, sans-serif" font-size="12.5" fill="#fff" y="641.4" x="967.55 974.50">34</text>
<text font-family="Liberation Sans, sans-serif" font-size="12.5" fill="#fff" y="641.4" x="1019.55 1026.50">59</text>
<text font-family="Liberation Sans, sans-serif" font-size="12.5" fill="#fff" y="641.4" x="1075.02">0</text>
<text font-family="Liberation Sans, sans-serif" font-size="12.5" fill="#fff" y="641.4" x="1120.07 1127.02 1133.98">100</text>
<text font-family="Liberation Sans, sans-serif" font-size="12.5" fill="#fff" y="641.4" x="1175.55 1182.50">49</text>
<rect x="14.5" y="648.5" width="11" height="10" fill="#fff" stroke="#d9d9d9"/>
<polyline points="16.2,653.8 19.4,657.3 22.8,651" fill="none" stroke="#000" stroke-width="0.9"/>
<rect x="44.5" y="650.5" width="11" height="6" fill="#ffff00" stroke="#b4b4b4"/>
<text font-family="'Liberation Sans', 'Noto Sans CJK JP', sans-serif" font-size="12.5" fill="#fff" x="68.05" y="658.4" textLength="37" lengthAdjust="spacingAndGlyphs">タイトル</text>
<text font-family="Liberation Sans, sans-serif" font-size="12.5" fill="#fff" y="658.4" x="105.00 111.95">03</text>
<text font-family="Liberation Sans, sans-serif" font-size="12.5" fill="#fff" y="658.4" x="603.55 610.50">21</text>
<text font-family="Liberation Sans, sans-serif" font-size="12.5" fill="#fff" y="658.4" x="655.55 662.50">57</text>
<text font-family="Liberation Sans, sans-serif" font-size="12.5" fill="#fff" y="658.4" x="707.55 714.50">30</text>
<text font-family="Liberation Sans, sans-serif" font-size="12.5" fill="#fff" y="658.4" x="759.55 766.50">33</text>
<text font-family="Liberation Sans, sans-serif" font-size="12.5" fill="#fff" y="658.4" x="811.55 818.50">99</text>
<text font-family="Liberation Sans, sans-serif" font-size="12.5" fill="#fff" y="658.4" x="863.55 870.50">78</text>
<text font-family="Liberation Sans, sans-serif" font-size="12.5" fill="#fff" y="658.4" x="919.02">1</text>
<text font-family="Liberation Sans, sans-serif" font-size="12.5" fill="#fff" y="658.4" x="967.55 974.50">99</text>
<text font-family="Liberation Sans, sans-serif" font-size="12.5" fill="#fff" y="658.4" x="1023.02">0</text>
<text font-family="Liberation Sans, sans-serif" font-size="12.5" fill="#fff" y="658.4" x="1075.02">0</text>
<text font-family="Liberation Sans, sans-serif" font-size="12.5" fill="#fff" y="658.4" x="1123.55 1130.50">99</text>
<text font-family="Liberation Sans, sans-serif" font-size="12.5" fill="#fff" y="658.4" x="1175.55 1182.50">51</text>
<rect x="14.5" y="665.5" width="11" height="10" fill="#fff" stroke="#d9d9d9"/>
<polyline points="16.2,670.8 19.4,674.3 22.8,668" fill="none" stroke="#000" stroke-width="0.9"/>
<rect x="44.5" y="667.5" width="11" height="6" fill="#00ffff" stroke="#b4b4b4"/>
<text font-family="'Liberation Sans', 'Noto Sans CJK JP', sans-serif" font-size="12.5" fill="#fff" x="68.05" y="675.4" textLength="37" lengthAdjust="spacingAndGlyphs">タイトル</text>
<text font-family="Liberation Sans, sans-serif" font-size="12.5" fill="#fff" y="675.4" x="105.00 111.95">04</text>
<text font-family="Liberation Sans, sans-serif" font-size="12.5" fill="#fff" y="675.4" x="603.55 610.50">95</text>
<text font-family="Liberation Sans, sans-serif" font-size="12.5" fill="#fff" y="675.4" x="655.55 662.50">98</text>
<text font-family="Liberation Sans, sans-serif" font-size="12.5" fill="#fff" y="675.4" x="707.55 714.50">96</text>
<text font-family="Liberation Sans, sans-serif" font-size="12.5" fill="#fff" y="675.4" x="759.55 766.50">96</text>
<text font-family="Liberation Sans, sans-serif" font-size="12.5" fill="#fff" y="675.4" x="811.55 818.50">99</text>
<text font-family="Liberation Sans, sans-serif" font-size="12.5" fill="#fff" y="675.4" x="863.55 870.50">98</text>
<text font-family="Liberation Sans, sans-serif" font-size="12.5" fill="#fff" y="675.4" x="915.55 922.50">31</text>
<text font-family="Liberation Sans, sans-serif" font-size="12.5" fill="#fff" y="675.4" x="967.55 974.50">66</text>
<text font-family="Liberation Sans, sans-serif" font-size="12.5" fill="#fff" y="675.4" x="1019.55 1026.50">33</text>
<text font-family="Liberation Sans, sans-serif" font-size="12.5" fill="#fff" y="675.4" x="1071.55 1078.50">34</text>
<text font-family="Liberation Sans, sans-serif" font-size="12.5" fill="#fff" y="675.4" x="1123.55 1130.50">66</text>
<text font-family="Liberation Sans, sans-serif" font-size="12.5" fill="#fff" y="675.4" x="1175.55 1182.50">50</text>
<rect x="14.5" y="682.5" width="11" height="10" fill="#fff" stroke="#d9d9d9"/>
<polyline points="16.2,687.8 19.4,691.3 22.8,685" fill="none" stroke="#000" stroke-width="0.9"/>
<rect x="44.5" y="684.5" width="11" height="6" fill="#00ff00" stroke="#b4b4b4"/>
<text font-family="'Liberation Sans', 'Noto Sans CJK JP', sans-serif" font-size="12.5" fill="#fff" x="68.05" y="692.4" textLength="37" lengthAdjust="spacingAndGlyphs">タイトル</text>
<text font-family="Liberation Sans, sans-serif" font-size="12.5" fill="#fff" y="692.4" x="105.00 111.95">05</text>
<text font-family="Liberation Sans, sans-serif" font-size="12.5" fill="#fff" y="692.4" x="607.02">0</text>
<text font-family="Liberation Sans, sans-serif" font-size="12.5" fill="#fff" y="692.4" x="659.02">1</text>
<text font-family="Liberation Sans, sans-serif" font-size="12.5" fill="#fff" y="692.4" x="711.02">1</text>
<text font-family="Liberation Sans, sans-serif" font-size="12.5" fill="#fff" y="692.4" x="763.02">0</text>
<text font-family="Liberation Sans, sans-serif" font-size="12.5" fill="#fff" y="692.4" x="815.02">1</text>
<text font-family="Liberation Sans, sans-serif" font-size="12.5" fill="#fff" y="692.4" x="867.02">1</text>
<text font-family="Liberation Sans, sans-serif" font-size="12.5" fill="#fff" y="692.4" x="919.02">0</text>
<text font-family="Liberation Sans, sans-serif" font-size="12.5" fill="#fff" y="692.4" x="971.02">1</text>
<text font-family="Liberation Sans, sans-serif" font-size="12.5" fill="#fff" y="692.4" x="1023.02">1</text>
<text font-family="Liberation Sans, sans-serif" font-size="12.5" fill="#fff" y="692.4" x="1075.02">0</text>
<text font-family="Liberation Sans, sans-serif" font-size="12.5" fill="#fff" y="692.4" x="1127.02">1</text>
<text font-family="Liberation Sans, sans-serif" font-size="12.5" fill="#fff" y="692.4" x="1179.02">1</text>
<rect x="14.5" y="699.5" width="11" height="10" fill="#fff" stroke="#d9d9d9"/>
<polyline points="16.2,704.8 19.4,708.3 22.8,702" fill="none" stroke="#000" stroke-width="0.9"/>
<rect x="44.5" y="701.5" width="11" height="6" fill="#f59646" stroke="#b4b4b4"/>
<text font-family="'Liberation Sans', 'Noto Sans CJK JP', sans-serif" font-size="12.5" fill="#fff" x="68.05" y="709.4" textLength="37" lengthAdjust="spacingAndGlyphs">タイトル</text>
<text font-family="Liberation Sans, sans-serif" font-size="12.5" fill="#fff" y="709.4" x="105.00 111.95">06</text>
<text font-family="Liberation Sans, sans-serif" font-size="12.5" fill="#fff" y="709.4" x="607.02">1</text>
<text font-family="Liberation Sans, sans-serif" font-size="12.5" fill="#fff" y="709.4" x="659.02">0</text>
<text font-family="Liberation Sans, sans-serif" font-size="12.5" fill="#fff" y="709.4" x="711.02">1</text>
<text font-family="Liberation Sans, sans-serif" font-size="12.5" fill="#fff" y="709.4" x="763.02">0</text>
<text font-family="Liberation Sans, sans-serif" font-size="12.5" fill="#fff" y="709.4" x="815.02">1</text>
<text font-family="Liberation Sans, sans-serif" font-size="12.5" fill="#fff" y="709.4" x="867.02">0</text>
<text font-family="Liberation Sans, sans-serif" font-size="12.5" fill="#fff" y="709.4" x="919.02">1</text>
<text font-family="Liberation Sans, sans-serif" font-size="12.5" fill="#fff" y="709.4" x="971.02">0</text>
<text font-family="Liberation Sans, sans-serif" font-size="12.5" fill="#fff" y="709.4" x="1023.02">1</text>
<text font-family="Liberation Sans, sans-serif" font-size="12.5" fill="#fff" y="709.4" x="1075.02">0</text>
<text font-family="Liberation Sans, sans-serif" font-size="12.5" fill="#fff" y="709.4" x="1127.02">1</text>
<text font-family="Liberation Sans, sans-serif" font-size="12.5" fill="#fff" y="709.4" x="1179.02">0</text>
<rect x="14.5" y="716.5" width="11" height="10" fill="#fff" stroke="#d9d9d9"/>
<polyline points="16.2,721.8 19.4,725.3 22.8,719" fill="none" stroke="#000" stroke-width="0.9"/>
<rect x="44.5" y="718.5" width="11" height="6" fill="#ff00ff" stroke="#b4b4b4"/>
<text font-family="'Liberation Sans', 'Noto Sans CJK JP', sans-serif" font-size="12.5" fill="#fff" x="68.05" y="726.4" textLength="37" lengthAdjust="spacingAndGlyphs">タイトル</text>
<text font-family="Liberation Sans, sans-serif" font-size="12.5" fill="#fff" y="726.4" x="105.00 111.95">07</text>
<text font-family="Liberation Sans, sans-serif" font-size="12.5" fill="#fff" y="726.4" x="594.65 601.81 605.50 612.45 619.40">3,409</text>
<text font-family="Liberation Sans, sans-serif" font-size="12.5" fill="#fff" y="726.4" x="646.65 653.81 657.50 664.45 671.40">3,352</text>
<text font-family="Liberation Sans, sans-serif" font-size="12.5" fill="#fff" y="726.4" x="698.65 705.81 709.50 716.45 723.40">3,406</text>
<text font-family="Liberation Sans, sans-serif" font-size="12.5" fill="#fff" y="726.4" x="750.65 757.81 761.50 768.45 775.40">3,352</text>
<text font-family="Liberation Sans, sans-serif" font-size="12.5" fill="#fff" y="726.4" x="802.65 809.81 813.50 820.45 827.40">3,405</text>
<text font-family="Liberation Sans, sans-serif" font-size="12.5" fill="#fff" y="726.4" x="854.65 861.81 865.50 872.45 879.40">3,379</text>
<text font-family="Liberation Sans, sans-serif" font-size="12.5" fill="#fff" y="726.4" x="906.65 913.81 917.50 924.45 931.40">3,529</text>
<text font-family="Liberation Sans, sans-serif" font-size="12.5" fill="#fff" y="726.4" x="958.65 965.81 969.50 976.45 983.40">3,472</text>
<text font-family="Liberation Sans, sans-serif" font-size="12.5" fill="#fff" y="726.4" x="1010.65 1017.81 1021.50 1028.45 1035.40">3,526</text>
<text font-family="Liberation Sans, sans-serif" font-size="12.5" fill="#fff" y="726.4" x="1062.65 1069.81 1073.50 1080.45 1087.40">3,472</text>
<text font-family="Liberation Sans, sans-serif" font-size="12.5" fill="#fff" y="726.4" x="1114.65 1121.81 1125.50 1132.45 1139.40">3,525</text>
<text font-family="Liberation Sans, sans-serif" font-size="12.5" fill="#fff" y="726.4" x="1166.65 1173.81 1177.50 1184.45 1191.40">3,499</text>
</svg>
</body></html>
